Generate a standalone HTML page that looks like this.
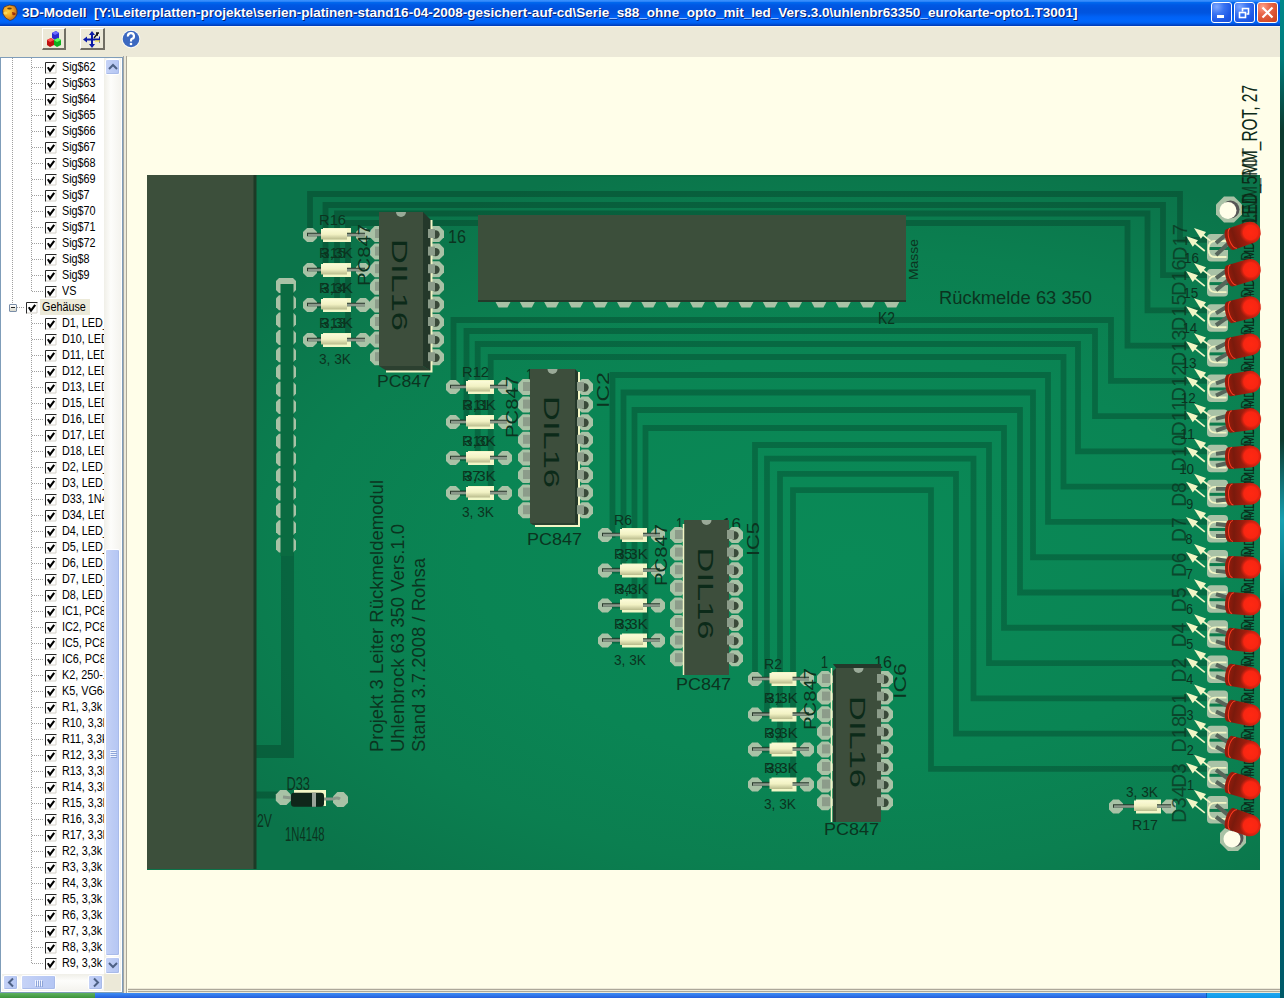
<!DOCTYPE html>
<html><head><meta charset="utf-8"><title>3D-Modell</title>
<style>
html,body{margin:0;padding:0;}
body{width:1284px;height:998px;overflow:hidden;position:relative;background:#fffee9;font-family:"Liberation Sans", sans-serif;}
.abs{position:absolute;}
.ttl{left:22px;top:5px;color:#fff;font-weight:bold;font-size:13px;white-space:nowrap;text-shadow:1px 1px 0 #0a1e6e;transform-origin:0 0;transform:scaleX(1.04);}
.trow{height:16px;font-size:12px;line-height:16px;white-space:nowrap;color:#000;transform:scaleX(0.9);transform-origin:0 0;margin-top:-1px;}
.chk{width:12px;height:12px;background:#fff;} .chk svg{display:block;} svg{display:block;}
.sb{box-sizing:border-box;border:1px solid #fff;border-radius:2px;background:linear-gradient(90deg,#c6d3f7,#bccbf4 50%,#b4c6f4);box-shadow:inset -1px -1px 0 #a9bbe9;}
</style></head><body>
<div class="abs" style="left:127px;top:56px;width:1153px;height:934px;background:#fffee9;"></div>
<svg class="abs" style="left:0;top:0;font-family:&quot;Liberation Sans&quot;, sans-serif;fill:#0b3420" width="1284" height="998" viewBox="0 0 1284 998">
<defs>
<radialGradient id="boardg" gradientUnits="userSpaceOnUse" cx="850" cy="560" r="750" gradientTransform="translate(850 560) scale(1 0.55) translate(-850 -560)">
<stop offset="0" stop-color="#0a8a57"/><stop offset="0.5" stop-color="#0a8554"/><stop offset="0.75" stop-color="#0b7f50"/><stop offset="1" stop-color="#0b744a"/></radialGradient>
<linearGradient id="resg" x1="0" y1="0" x2="0" y2="1">
<stop offset="0" stop-color="#fbfbd8"/><stop offset="0.5" stop-color="#f2f2c4"/><stop offset="1" stop-color="#b9bb8c"/></linearGradient>
<linearGradient id="ledb" x1="0" y1="0" x2="1" y2="0">
<stop offset="0" stop-color="#a01c0c"/><stop offset="0.25" stop-color="#7a1a0c"/><stop offset="0.7" stop-color="#b82010"/><stop offset="1" stop-color="#e02410"/></linearGradient>
<radialGradient id="ledd" cx="0.5" cy="0.5" r="0.5">
<stop offset="0" stop-color="#ff2812"/><stop offset="0.65" stop-color="#f82612"/><stop offset="1" stop-color="#d02010" stop-opacity="0"/></radialGradient>
</defs>
<rect x="147" y="175" width="1113" height="695" fill="url(#boardg)"/>
<rect x="147" y="175" width="1113" height="1.5" fill="#0a6b42"/>
<g opacity="0.2">
<path d="M310,235 L310,235 L310,194 L1180,194 L1180,239.8 L1215,239.8" fill="none" stroke="#000" stroke-width="5.8" stroke-linejoin="miter" stroke-linecap="square"/>
<path d="M310,270 L325.5,270 L325.5,205 L1163,205 L1163,275.07 L1215,275.07" fill="none" stroke="#000" stroke-width="5.8" stroke-linejoin="miter" stroke-linecap="square"/>
<path d="M310,305 L337,305 L337,213.5 L1147.5,213.5 L1147.5,310.34000000000003 L1215,310.34000000000003" fill="none" stroke="#000" stroke-width="5.8" stroke-linejoin="miter" stroke-linecap="square"/>
<path d="M310,340 L348,340 L348,223 L1127.5,223 L1127.5,345.61 L1215,345.61" fill="none" stroke="#000" stroke-width="5.8" stroke-linejoin="miter" stroke-linecap="square"/>
<path d="M453,387 L453.5,387 L453.5,320 L1111,320 L1111,380.88 L1215,380.88" fill="none" stroke="#000" stroke-width="5.8" stroke-linejoin="miter" stroke-linecap="square"/>
<path d="M453,422 L466.5,422 L466.5,331 L1095,331 L1095,416.15000000000003 L1215,416.15000000000003" fill="none" stroke="#000" stroke-width="5.8" stroke-linejoin="miter" stroke-linecap="square"/>
<path d="M453,458 L477.7,458 L477.7,344 L1078,344 L1078,451.42 L1215,451.42" fill="none" stroke="#000" stroke-width="5.8" stroke-linejoin="miter" stroke-linecap="square"/>
<path d="M453,493 L490.7,493 L490.7,357 L1063.5,357 L1063.5,486.69000000000005 L1215,486.69000000000005" fill="none" stroke="#000" stroke-width="5.8" stroke-linejoin="miter" stroke-linecap="square"/>
<path d="M605,535 L612.5,535 L612.5,375 L1048,375 L1048,521.96 L1215,521.96" fill="none" stroke="#000" stroke-width="5.8" stroke-linejoin="miter" stroke-linecap="square"/>
<path d="M605,570.5 L623.5,570.5 L623.5,392.5 L1033,392.5 L1033,557.23 L1215,557.23" fill="none" stroke="#000" stroke-width="5.8" stroke-linejoin="miter" stroke-linecap="square"/>
<path d="M605,605.5 L634.5,605.5 L634.5,410 L1020,410 L1020,592.5 L1215,592.5" fill="none" stroke="#000" stroke-width="5.8" stroke-linejoin="miter" stroke-linecap="square"/>
<path d="M605,640.5 L645.5,640.5 L645.5,428 L1004,428 L1004,627.77 L1215,627.77" fill="none" stroke="#000" stroke-width="5.8" stroke-linejoin="miter" stroke-linecap="square"/>
<path d="M755,679 L755,679 L755,445 L989,445 L989,663.04 L1215,663.04" fill="none" stroke="#000" stroke-width="5.8" stroke-linejoin="miter" stroke-linecap="square"/>
<path d="M755,714.6 L767,714.6 L767,458.6 L973.5,458.6 L973.5,698.3100000000001 L1215,698.3100000000001" fill="none" stroke="#000" stroke-width="5.8" stroke-linejoin="miter" stroke-linecap="square"/>
<path d="M755,749.5 L780,749.5 L780,473.8 L956,473.8 L956,733.58 L1215,733.58" fill="none" stroke="#000" stroke-width="5.8" stroke-linejoin="miter" stroke-linecap="square"/>
<path d="M755,784.5 L793,784.5 L793,490.2 L931,490.2 L931,768.8500000000001 L1215,768.8500000000001" fill="none" stroke="#000" stroke-width="5.8" stroke-linejoin="miter" stroke-linecap="square"/>
<path d="M255,751.5 L287.5,751.5 L287.5,285" fill="none" stroke="#000" stroke-width="13" stroke-linejoin="miter" stroke-linecap="square"/>
<path d="M255,795 L283,795" fill="none" stroke="#000" stroke-width="7" stroke-linejoin="miter" stroke-linecap="square"/>
</g>
<rect x="147" y="175" width="108" height="694" fill="#3c4f3b"/>
<rect x="253.5" y="175" width="3" height="694" fill="#1d3a26"/>
<path d="M276,281.0 L279,278.0 L293,278.0 L296,281.0 L296,290.0 L293,293.0 L279,293.0 L276,290.0 Z" fill="#a9c2a6"/>
<path d="M276,298.3 L279,295.3 L293,295.3 L296,298.3 L296,307.3 L293,310.3 L279,310.3 L276,307.3 Z" fill="#a9c2a6"/>
<path d="M276,315.6 L279,312.6 L293,312.6 L296,315.6 L296,324.6 L293,327.6 L279,327.6 L276,324.6 Z" fill="#a9c2a6"/>
<path d="M276,332.9 L279,329.9 L293,329.9 L296,332.9 L296,341.9 L293,344.9 L279,344.9 L276,341.9 Z" fill="#a9c2a6"/>
<path d="M276,350.2 L279,347.2 L293,347.2 L296,350.2 L296,359.2 L293,362.2 L279,362.2 L276,359.2 Z" fill="#a9c2a6"/>
<path d="M276,367.5 L279,364.5 L293,364.5 L296,367.5 L296,376.5 L293,379.5 L279,379.5 L276,376.5 Z" fill="#a9c2a6"/>
<path d="M276,384.8 L279,381.8 L293,381.8 L296,384.8 L296,393.8 L293,396.8 L279,396.8 L276,393.8 Z" fill="#a9c2a6"/>
<path d="M276,402.1 L279,399.1 L293,399.1 L296,402.1 L296,411.1 L293,414.1 L279,414.1 L276,411.1 Z" fill="#a9c2a6"/>
<path d="M276,419.4 L279,416.4 L293,416.4 L296,419.4 L296,428.4 L293,431.4 L279,431.4 L276,428.4 Z" fill="#a9c2a6"/>
<path d="M276,436.70000000000005 L279,433.70000000000005 L293,433.70000000000005 L296,436.70000000000005 L296,445.70000000000005 L293,448.70000000000005 L279,448.70000000000005 L276,445.70000000000005 Z" fill="#a9c2a6"/>
<path d="M276,454.0 L279,451.0 L293,451.0 L296,454.0 L296,463.0 L293,466.0 L279,466.0 L276,463.0 Z" fill="#a9c2a6"/>
<path d="M276,471.3 L279,468.3 L293,468.3 L296,471.3 L296,480.3 L293,483.3 L279,483.3 L276,480.3 Z" fill="#a9c2a6"/>
<path d="M276,488.6 L279,485.6 L293,485.6 L296,488.6 L296,497.6 L293,500.6 L279,500.6 L276,497.6 Z" fill="#a9c2a6"/>
<path d="M276,505.9 L279,502.9 L293,502.9 L296,505.9 L296,514.9 L293,517.9 L279,517.9 L276,514.9 Z" fill="#a9c2a6"/>
<path d="M276,523.2 L279,520.2 L293,520.2 L296,523.2 L296,532.2 L293,535.2 L279,535.2 L276,532.2 Z" fill="#a9c2a6"/>
<path d="M276,540.5 L279,537.5 L293,537.5 L296,540.5 L296,549.5 L293,552.5 L279,552.5 L276,549.5 Z" fill="#a9c2a6"/>
<path d="M287,284 L287,556" stroke="#0a6b41" stroke-width="13"/>
<path d="M495.0,301 L511.0,301 L507.5,307.5 L498.5,307.5 Z" fill="#a9c2a6"/>
<path d="M519.3,301 L535.3,301 L531.8,307.5 L522.8,307.5 Z" fill="#a9c2a6"/>
<path d="M543.6,301 L559.6,301 L556.1,307.5 L547.1,307.5 Z" fill="#a9c2a6"/>
<path d="M567.9,301 L583.9,301 L580.4,307.5 L571.4,307.5 Z" fill="#a9c2a6"/>
<path d="M592.2,301 L608.2,301 L604.7,307.5 L595.7,307.5 Z" fill="#a9c2a6"/>
<path d="M616.5,301 L632.5,301 L629.0,307.5 L620.0,307.5 Z" fill="#a9c2a6"/>
<path d="M640.8,301 L656.8,301 L653.3,307.5 L644.3,307.5 Z" fill="#a9c2a6"/>
<path d="M665.1,301 L681.1,301 L677.6,307.5 L668.6,307.5 Z" fill="#a9c2a6"/>
<path d="M689.4,301 L705.4,301 L701.9,307.5 L692.9,307.5 Z" fill="#a9c2a6"/>
<path d="M713.7,301 L729.7,301 L726.2,307.5 L717.2,307.5 Z" fill="#a9c2a6"/>
<path d="M738.0,301 L754.0,301 L750.5,307.5 L741.5,307.5 Z" fill="#a9c2a6"/>
<path d="M762.3,301 L778.3,301 L774.8,307.5 L765.8,307.5 Z" fill="#a9c2a6"/>
<path d="M786.6,301 L802.6,301 L799.1,307.5 L790.1,307.5 Z" fill="#a9c2a6"/>
<path d="M810.9000000000001,301 L826.9000000000001,301 L823.4000000000001,307.5 L814.4000000000001,307.5 Z" fill="#a9c2a6"/>
<path d="M835.2,301 L851.2,301 L847.7,307.5 L838.7,307.5 Z" fill="#a9c2a6"/>
<path d="M859.5,301 L875.5,301 L872.0,307.5 L863.0,307.5 Z" fill="#a9c2a6"/>
<path d="M883.8,301 L899.8,301 L896.3,307.5 L887.3,307.5 Z" fill="#a9c2a6"/>
<rect x="478" y="215" width="428" height="86" fill="#3c4f3b"/>
<rect x="478" y="300" width="428" height="2" fill="#243a2a"/>
<path d="M370,230.7 L374.7,226.0 L381.3,226.0 L386,230.7 L386,237.3 L381.3,242.0 L374.7,242.0 L370,237.3 Z" fill="#a9c2a6"/>
<path d="M428,230.7 L432.7,226.0 L439.3,226.0 L444,230.7 L444,237.3 L439.3,242.0 L432.7,242.0 L428,237.3 Z" fill="#a9c2a6"/>
<path d="M370,248.29999999999998 L374.7,243.6 L381.3,243.6 L386,248.29999999999998 L386,254.9 L381.3,259.6 L374.7,259.6 L370,254.9 Z" fill="#a9c2a6"/>
<path d="M428,248.29999999999998 L432.7,243.6 L439.3,243.6 L444,248.29999999999998 L444,254.9 L439.3,259.6 L432.7,259.6 L428,254.9 Z" fill="#a9c2a6"/>
<path d="M370,265.9 L374.7,261.2 L381.3,261.2 L386,265.9 L386,272.5 L381.3,277.2 L374.7,277.2 L370,272.5 Z" fill="#a9c2a6"/>
<path d="M428,265.9 L432.7,261.2 L439.3,261.2 L444,265.9 L444,272.5 L439.3,277.2 L432.7,277.2 L428,272.5 Z" fill="#a9c2a6"/>
<path d="M370,283.5 L374.7,278.8 L381.3,278.8 L386,283.5 L386,290.1 L381.3,294.8 L374.7,294.8 L370,290.1 Z" fill="#a9c2a6"/>
<path d="M428,283.5 L432.7,278.8 L439.3,278.8 L444,283.5 L444,290.1 L439.3,294.8 L432.7,294.8 L428,290.1 Z" fill="#a9c2a6"/>
<path d="M370,301.09999999999997 L374.7,296.4 L381.3,296.4 L386,301.09999999999997 L386,307.7 L381.3,312.4 L374.7,312.4 L370,307.7 Z" fill="#a9c2a6"/>
<path d="M428,301.09999999999997 L432.7,296.4 L439.3,296.4 L444,301.09999999999997 L444,307.7 L439.3,312.4 L432.7,312.4 L428,307.7 Z" fill="#a9c2a6"/>
<path d="M370,318.7 L374.7,314.0 L381.3,314.0 L386,318.7 L386,325.3 L381.3,330.0 L374.7,330.0 L370,325.3 Z" fill="#a9c2a6"/>
<path d="M428,318.7 L432.7,314.0 L439.3,314.0 L444,318.7 L444,325.3 L439.3,330.0 L432.7,330.0 L428,325.3 Z" fill="#a9c2a6"/>
<path d="M370,336.3 L374.7,331.6 L381.3,331.6 L386,336.3 L386,342.90000000000003 L381.3,347.6 L374.7,347.6 L370,342.90000000000003 Z" fill="#a9c2a6"/>
<path d="M428,336.3 L432.7,331.6 L439.3,331.6 L444,336.3 L444,342.90000000000003 L439.3,347.6 L432.7,347.6 L428,342.90000000000003 Z" fill="#a9c2a6"/>
<path d="M370,353.90000000000003 L374.7,349.20000000000005 L381.3,349.20000000000005 L386,353.90000000000003 L386,360.50000000000006 L381.3,365.20000000000005 L374.7,365.20000000000005 L370,360.50000000000006 Z" fill="#a9c2a6"/>
<path d="M428,353.90000000000003 L432.7,349.20000000000005 L439.3,349.20000000000005 L444,353.90000000000003 L444,360.50000000000006 L439.3,365.20000000000005 L432.7,365.20000000000005 L428,360.50000000000006 Z" fill="#a9c2a6"/>
<rect x="375" y="229.0" width="8" height="9" fill="#8c9c8a"/>
<rect x="375" y="246.6" width="8" height="9" fill="#8c9c8a"/>
<rect x="375" y="264.2" width="8" height="9" fill="#8c9c8a"/>
<rect x="375" y="281.8" width="8" height="9" fill="#8c9c8a"/>
<rect x="375" y="299.4" width="8" height="9" fill="#8c9c8a"/>
<rect x="375" y="317.0" width="8" height="9" fill="#8c9c8a"/>
<rect x="375" y="334.6" width="8" height="9" fill="#8c9c8a"/>
<rect x="375" y="352.20000000000005" width="8" height="9" fill="#8c9c8a"/>
<path d="M303,232.06 L307.06,228 L312.94,228 L317,232.06 L317,237.94 L312.94,242 L307.06,242 L303,237.94 Z" fill="#a9c2a6"/>
<path d="M356,232.06 L360.06,228 L365.94,228 L370,232.06 L370,237.94 L365.94,242 L360.06,242 L356,237.94 Z" fill="#a9c2a6"/>
<rect x="323" y="228" width="28" height="14" fill="#f2f6c6"/>
<line x1="307" y1="234.5" x2="365" y2="234.5" stroke="#2a3a2c" stroke-width="3.6"/>
<line x1="308" y1="235" x2="365" y2="235" stroke="#8a988a" stroke-width="2.4"/>
<rect x="321" y="229" width="26" height="10.5" fill="url(#resg)"/>
<path d="M303,267.06 L307.06,263 L312.94,263 L317,267.06 L317,272.94 L312.94,277 L307.06,277 L303,272.94 Z" fill="#a9c2a6"/>
<path d="M356,267.06 L360.06,263 L365.94,263 L370,267.06 L370,272.94 L365.94,277 L360.06,277 L356,272.94 Z" fill="#a9c2a6"/>
<rect x="323" y="263" width="28" height="14" fill="#f2f6c6"/>
<line x1="307" y1="269.5" x2="365" y2="269.5" stroke="#2a3a2c" stroke-width="3.6"/>
<line x1="308" y1="270" x2="365" y2="270" stroke="#8a988a" stroke-width="2.4"/>
<rect x="321" y="264" width="26" height="10.5" fill="url(#resg)"/>
<path d="M303,302.06 L307.06,298 L312.94,298 L317,302.06 L317,307.94 L312.94,312 L307.06,312 L303,307.94 Z" fill="#a9c2a6"/>
<path d="M356,302.06 L360.06,298 L365.94,298 L370,302.06 L370,307.94 L365.94,312 L360.06,312 L356,307.94 Z" fill="#a9c2a6"/>
<rect x="323" y="298" width="28" height="14" fill="#f2f6c6"/>
<line x1="307" y1="304.5" x2="365" y2="304.5" stroke="#2a3a2c" stroke-width="3.6"/>
<line x1="308" y1="305" x2="365" y2="305" stroke="#8a988a" stroke-width="2.4"/>
<rect x="321" y="299" width="26" height="10.5" fill="url(#resg)"/>
<path d="M303,337.06 L307.06,333 L312.94,333 L317,337.06 L317,342.94 L312.94,347 L307.06,347 L303,342.94 Z" fill="#a9c2a6"/>
<path d="M356,337.06 L360.06,333 L365.94,333 L370,337.06 L370,342.94 L365.94,347 L360.06,347 L356,342.94 Z" fill="#a9c2a6"/>
<rect x="323" y="333" width="28" height="14" fill="#f2f6c6"/>
<line x1="307" y1="339.5" x2="365" y2="339.5" stroke="#2a3a2c" stroke-width="3.6"/>
<line x1="308" y1="340" x2="365" y2="340" stroke="#8a988a" stroke-width="2.4"/>
<rect x="321" y="334" width="26" height="10.5" fill="url(#resg)"/>
<path d="M423,212 L431,220 L431,371 L423,366 Z" fill="#24382a"/>
<path d="M379,366 L423,366 L431,371 L387,371 Z" fill="#2c4030"/>
<rect x="379" y="212" width="44" height="154" fill="#3d4e3c"/>
<path d="M396.0,212 A5,5 0 0 0 406.0,212 Z" fill="#9aaa98"/>
<path d="M431.5,220 L431.5,371.5 L386,371.5" fill="none" stroke="#f2f6c6" stroke-width="2"/>
<circle cx="435.5" cy="234.5" r="4.2" fill="#3a4a3a"/>
<rect x="428" y="229.0" width="7" height="9" fill="#8c9c8a"/>
<circle cx="435.5" cy="252.1" r="4.2" fill="#3a4a3a"/>
<rect x="428" y="246.6" width="7" height="9" fill="#8c9c8a"/>
<circle cx="435.5" cy="269.7" r="4.2" fill="#3a4a3a"/>
<rect x="428" y="264.2" width="7" height="9" fill="#8c9c8a"/>
<circle cx="435.5" cy="287.3" r="4.2" fill="#3a4a3a"/>
<rect x="428" y="281.8" width="7" height="9" fill="#8c9c8a"/>
<circle cx="435.5" cy="304.9" r="4.2" fill="#3a4a3a"/>
<rect x="428" y="299.4" width="7" height="9" fill="#8c9c8a"/>
<circle cx="435.5" cy="322.5" r="4.2" fill="#3a4a3a"/>
<rect x="428" y="317.0" width="7" height="9" fill="#8c9c8a"/>
<circle cx="435.5" cy="340.1" r="4.2" fill="#3a4a3a"/>
<rect x="428" y="334.6" width="7" height="9" fill="#8c9c8a"/>
<circle cx="435.5" cy="357.70000000000005" r="4.2" fill="#3a4a3a"/>
<rect x="428" y="352.20000000000005" width="7" height="9" fill="#8c9c8a"/>
<text x="400" y="285" font-size="22" fill="#0c2a19" text-anchor="middle" transform="rotate(90 400 285)" dy="8" textLength="92" lengthAdjust="spacingAndGlyphs">DIL16</text>
<text x="448" y="243" font-size="19" textLength="18" lengthAdjust="spacingAndGlyphs">16</text>
<text x="377" y="387" font-size="16" textLength="54" lengthAdjust="spacingAndGlyphs">PC847</text>
<text x="526" y="381" font-size="17" textLength="7" lengthAdjust="spacingAndGlyphs">1</text>
<text x="676" y="530" font-size="17" textLength="7" lengthAdjust="spacingAndGlyphs">1</text>
<text x="821" y="668" font-size="17" textLength="7" lengthAdjust="spacingAndGlyphs">1</text>
<text x="722" y="530" font-size="17" textLength="19" lengthAdjust="spacingAndGlyphs">16</text>
<text x="874" y="668" font-size="17" textLength="18" lengthAdjust="spacingAndGlyphs">16</text>
<path d="M518,383.7 L522.7,379.0 L529.3,379.0 L534,383.7 L534,390.3 L529.3,395.0 L522.7,395.0 L518,390.3 Z" fill="#a9c2a6"/>
<path d="M577,383.7 L581.7,379.0 L588.3,379.0 L593,383.7 L593,390.3 L588.3,395.0 L581.7,395.0 L577,390.3 Z" fill="#a9c2a6"/>
<path d="M518,401.3 L522.7,396.6 L529.3,396.6 L534,401.3 L534,407.90000000000003 L529.3,412.6 L522.7,412.6 L518,407.90000000000003 Z" fill="#a9c2a6"/>
<path d="M577,401.3 L581.7,396.6 L588.3,396.6 L593,401.3 L593,407.90000000000003 L588.3,412.6 L581.7,412.6 L577,407.90000000000003 Z" fill="#a9c2a6"/>
<path d="M518,418.9 L522.7,414.2 L529.3,414.2 L534,418.9 L534,425.5 L529.3,430.2 L522.7,430.2 L518,425.5 Z" fill="#a9c2a6"/>
<path d="M577,418.9 L581.7,414.2 L588.3,414.2 L593,418.9 L593,425.5 L588.3,430.2 L581.7,430.2 L577,425.5 Z" fill="#a9c2a6"/>
<path d="M518,436.5 L522.7,431.8 L529.3,431.8 L534,436.5 L534,443.1 L529.3,447.8 L522.7,447.8 L518,443.1 Z" fill="#a9c2a6"/>
<path d="M577,436.5 L581.7,431.8 L588.3,431.8 L593,436.5 L593,443.1 L588.3,447.8 L581.7,447.8 L577,443.1 Z" fill="#a9c2a6"/>
<path d="M518,454.09999999999997 L522.7,449.4 L529.3,449.4 L534,454.09999999999997 L534,460.7 L529.3,465.4 L522.7,465.4 L518,460.7 Z" fill="#a9c2a6"/>
<path d="M577,454.09999999999997 L581.7,449.4 L588.3,449.4 L593,454.09999999999997 L593,460.7 L588.3,465.4 L581.7,465.4 L577,460.7 Z" fill="#a9c2a6"/>
<path d="M518,471.7 L522.7,467.0 L529.3,467.0 L534,471.7 L534,478.3 L529.3,483.0 L522.7,483.0 L518,478.3 Z" fill="#a9c2a6"/>
<path d="M577,471.7 L581.7,467.0 L588.3,467.0 L593,471.7 L593,478.3 L588.3,483.0 L581.7,483.0 L577,478.3 Z" fill="#a9c2a6"/>
<path d="M518,489.3 L522.7,484.6 L529.3,484.6 L534,489.3 L534,495.90000000000003 L529.3,500.6 L522.7,500.6 L518,495.90000000000003 Z" fill="#a9c2a6"/>
<path d="M577,489.3 L581.7,484.6 L588.3,484.6 L593,489.3 L593,495.90000000000003 L588.3,500.6 L581.7,500.6 L577,495.90000000000003 Z" fill="#a9c2a6"/>
<path d="M518,506.90000000000003 L522.7,502.20000000000005 L529.3,502.20000000000005 L534,506.90000000000003 L534,513.5 L529.3,518.2 L522.7,518.2 L518,513.5 Z" fill="#a9c2a6"/>
<path d="M577,506.90000000000003 L581.7,502.20000000000005 L588.3,502.20000000000005 L593,506.90000000000003 L593,513.5 L588.3,518.2 L581.7,518.2 L577,513.5 Z" fill="#a9c2a6"/>
<rect x="523" y="382.0" width="8" height="9" fill="#8c9c8a"/>
<rect x="523" y="399.6" width="8" height="9" fill="#8c9c8a"/>
<rect x="523" y="417.2" width="8" height="9" fill="#8c9c8a"/>
<rect x="523" y="434.8" width="8" height="9" fill="#8c9c8a"/>
<rect x="523" y="452.4" width="8" height="9" fill="#8c9c8a"/>
<rect x="523" y="470.0" width="8" height="9" fill="#8c9c8a"/>
<rect x="523" y="487.6" width="8" height="9" fill="#8c9c8a"/>
<rect x="523" y="505.20000000000005" width="8" height="9" fill="#8c9c8a"/>
<path d="M446,384.06 L450.06,380 L455.94,380 L460,384.06 L460,389.94 L455.94,394 L450.06,394 L446,389.94 Z" fill="#a9c2a6"/>
<path d="M498,384.06 L502.06,380 L507.94,380 L512,384.06 L512,389.94 L507.94,394 L502.06,394 L498,389.94 Z" fill="#a9c2a6"/>
<rect x="468" y="380" width="26" height="14" fill="#f2f6c6"/>
<line x1="450" y1="386.5" x2="507" y2="386.5" stroke="#2a3a2c" stroke-width="3.6"/>
<line x1="451" y1="387" x2="507" y2="387" stroke="#8a988a" stroke-width="2.4"/>
<rect x="466" y="381" width="24" height="10.5" fill="url(#resg)"/>
<path d="M446,419.06 L450.06,415 L455.94,415 L460,419.06 L460,424.94 L455.94,429 L450.06,429 L446,424.94 Z" fill="#a9c2a6"/>
<path d="M498,419.06 L502.06,415 L507.94,415 L512,419.06 L512,424.94 L507.94,429 L502.06,429 L498,424.94 Z" fill="#a9c2a6"/>
<rect x="468" y="415" width="26" height="14" fill="#f2f6c6"/>
<line x1="450" y1="421.5" x2="507" y2="421.5" stroke="#2a3a2c" stroke-width="3.6"/>
<line x1="451" y1="422" x2="507" y2="422" stroke="#8a988a" stroke-width="2.4"/>
<rect x="466" y="416" width="24" height="10.5" fill="url(#resg)"/>
<path d="M446,455.06 L450.06,451 L455.94,451 L460,455.06 L460,460.94 L455.94,465 L450.06,465 L446,460.94 Z" fill="#a9c2a6"/>
<path d="M498,455.06 L502.06,451 L507.94,451 L512,455.06 L512,460.94 L507.94,465 L502.06,465 L498,460.94 Z" fill="#a9c2a6"/>
<rect x="468" y="451" width="26" height="14" fill="#f2f6c6"/>
<line x1="450" y1="457.5" x2="507" y2="457.5" stroke="#2a3a2c" stroke-width="3.6"/>
<line x1="451" y1="458" x2="507" y2="458" stroke="#8a988a" stroke-width="2.4"/>
<rect x="466" y="452" width="24" height="10.5" fill="url(#resg)"/>
<path d="M446,490.06 L450.06,486 L455.94,486 L460,490.06 L460,495.94 L455.94,500 L450.06,500 L446,495.94 Z" fill="#a9c2a6"/>
<path d="M498,490.06 L502.06,486 L507.94,486 L512,490.06 L512,495.94 L507.94,500 L502.06,500 L498,495.94 Z" fill="#a9c2a6"/>
<rect x="468" y="486" width="26" height="14" fill="#f2f6c6"/>
<line x1="450" y1="492.5" x2="507" y2="492.5" stroke="#2a3a2c" stroke-width="3.6"/>
<line x1="451" y1="493" x2="507" y2="493" stroke="#8a988a" stroke-width="2.4"/>
<rect x="466" y="487" width="24" height="10.5" fill="url(#resg)"/>
<path d="M575,369 L578,372 L578,525 L575,523 Z" fill="#24382a"/>
<path d="M530,523 L575,523 L578,525 L533,525 Z" fill="#2c4030"/>
<rect x="530" y="369" width="45" height="154" fill="#3d4e3c"/>
<path d="M547.5,369 A5,5 0 0 0 557.5,369 Z" fill="#9aaa98"/>
<path d="M579,372 L579,526 L535,526" fill="none" stroke="#f2f6c6" stroke-width="2"/>
<circle cx="584.5" cy="387.5" r="4.2" fill="#3a4a3a"/>
<rect x="577" y="382.0" width="7" height="9" fill="#8c9c8a"/>
<circle cx="584.5" cy="405.1" r="4.2" fill="#3a4a3a"/>
<rect x="577" y="399.6" width="7" height="9" fill="#8c9c8a"/>
<circle cx="584.5" cy="422.7" r="4.2" fill="#3a4a3a"/>
<rect x="577" y="417.2" width="7" height="9" fill="#8c9c8a"/>
<circle cx="584.5" cy="440.3" r="4.2" fill="#3a4a3a"/>
<rect x="577" y="434.8" width="7" height="9" fill="#8c9c8a"/>
<circle cx="584.5" cy="457.9" r="4.2" fill="#3a4a3a"/>
<rect x="577" y="452.4" width="7" height="9" fill="#8c9c8a"/>
<circle cx="584.5" cy="475.5" r="4.2" fill="#3a4a3a"/>
<rect x="577" y="470.0" width="7" height="9" fill="#8c9c8a"/>
<circle cx="584.5" cy="493.1" r="4.2" fill="#3a4a3a"/>
<rect x="577" y="487.6" width="7" height="9" fill="#8c9c8a"/>
<circle cx="584.5" cy="510.70000000000005" r="4.2" fill="#3a4a3a"/>
<rect x="577" y="505.20000000000005" width="7" height="9" fill="#8c9c8a"/>
<text x="552" y="442" font-size="22" fill="#0c2a19" text-anchor="middle" transform="rotate(90 552 442)" dy="8" textLength="92" lengthAdjust="spacingAndGlyphs">DIL16</text>
<text x="527" y="545" font-size="16" textLength="55" lengthAdjust="spacingAndGlyphs">PC847</text>
<path d="M670,531.7 L674.7,527.0 L681.3,527.0 L686,531.7 L686,538.3 L681.3,543.0 L674.7,543.0 L670,538.3 Z" fill="#a9c2a6"/>
<path d="M727,531.7 L731.7,527.0 L738.3,527.0 L743,531.7 L743,538.3 L738.3,543.0 L731.7,543.0 L727,538.3 Z" fill="#a9c2a6"/>
<path d="M670,549.3000000000001 L674.7,544.6 L681.3,544.6 L686,549.3000000000001 L686,555.9 L681.3,560.6 L674.7,560.6 L670,555.9 Z" fill="#a9c2a6"/>
<path d="M727,549.3000000000001 L731.7,544.6 L738.3,544.6 L743,549.3000000000001 L743,555.9 L738.3,560.6 L731.7,560.6 L727,555.9 Z" fill="#a9c2a6"/>
<path d="M670,566.9000000000001 L674.7,562.2 L681.3,562.2 L686,566.9000000000001 L686,573.5 L681.3,578.2 L674.7,578.2 L670,573.5 Z" fill="#a9c2a6"/>
<path d="M727,566.9000000000001 L731.7,562.2 L738.3,562.2 L743,566.9000000000001 L743,573.5 L738.3,578.2 L731.7,578.2 L727,573.5 Z" fill="#a9c2a6"/>
<path d="M670,584.5 L674.7,579.8 L681.3,579.8 L686,584.5 L686,591.0999999999999 L681.3,595.8 L674.7,595.8 L670,591.0999999999999 Z" fill="#a9c2a6"/>
<path d="M727,584.5 L731.7,579.8 L738.3,579.8 L743,584.5 L743,591.0999999999999 L738.3,595.8 L731.7,595.8 L727,591.0999999999999 Z" fill="#a9c2a6"/>
<path d="M670,602.1 L674.7,597.4 L681.3,597.4 L686,602.1 L686,608.6999999999999 L681.3,613.4 L674.7,613.4 L670,608.6999999999999 Z" fill="#a9c2a6"/>
<path d="M727,602.1 L731.7,597.4 L738.3,597.4 L743,602.1 L743,608.6999999999999 L738.3,613.4 L731.7,613.4 L727,608.6999999999999 Z" fill="#a9c2a6"/>
<path d="M670,619.7 L674.7,615.0 L681.3,615.0 L686,619.7 L686,626.3 L681.3,631.0 L674.7,631.0 L670,626.3 Z" fill="#a9c2a6"/>
<path d="M727,619.7 L731.7,615.0 L738.3,615.0 L743,619.7 L743,626.3 L738.3,631.0 L731.7,631.0 L727,626.3 Z" fill="#a9c2a6"/>
<path d="M670,637.3000000000001 L674.7,632.6 L681.3,632.6 L686,637.3000000000001 L686,643.9 L681.3,648.6 L674.7,648.6 L670,643.9 Z" fill="#a9c2a6"/>
<path d="M727,637.3000000000001 L731.7,632.6 L738.3,632.6 L743,637.3000000000001 L743,643.9 L738.3,648.6 L731.7,648.6 L727,643.9 Z" fill="#a9c2a6"/>
<path d="M670,654.9000000000001 L674.7,650.2 L681.3,650.2 L686,654.9000000000001 L686,661.5 L681.3,666.2 L674.7,666.2 L670,661.5 Z" fill="#a9c2a6"/>
<path d="M727,654.9000000000001 L731.7,650.2 L738.3,650.2 L743,654.9000000000001 L743,661.5 L738.3,666.2 L731.7,666.2 L727,661.5 Z" fill="#a9c2a6"/>
<rect x="675" y="530.0" width="8" height="9" fill="#8c9c8a"/>
<rect x="675" y="547.6" width="8" height="9" fill="#8c9c8a"/>
<rect x="675" y="565.2" width="8" height="9" fill="#8c9c8a"/>
<rect x="675" y="582.8" width="8" height="9" fill="#8c9c8a"/>
<rect x="675" y="600.4" width="8" height="9" fill="#8c9c8a"/>
<rect x="675" y="618.0" width="8" height="9" fill="#8c9c8a"/>
<rect x="675" y="635.6" width="8" height="9" fill="#8c9c8a"/>
<rect x="675" y="653.2" width="8" height="9" fill="#8c9c8a"/>
<path d="M598,532.06 L602.06,528 L607.94,528 L612,532.06 L612,537.94 L607.94,542 L602.06,542 L598,537.94 Z" fill="#a9c2a6"/>
<path d="M651,532.06 L655.06,528 L660.94,528 L665,532.06 L665,537.94 L660.94,542 L655.06,542 L651,537.94 Z" fill="#a9c2a6"/>
<rect x="622" y="528" width="25" height="14" fill="#f2f6c6"/>
<line x1="602" y1="534.5" x2="660" y2="534.5" stroke="#2a3a2c" stroke-width="3.6"/>
<line x1="603" y1="535" x2="660" y2="535" stroke="#8a988a" stroke-width="2.4"/>
<rect x="620" y="529" width="23" height="10.5" fill="url(#resg)"/>
<path d="M598,567.56 L602.06,563.5 L607.94,563.5 L612,567.56 L612,573.44 L607.94,577.5 L602.06,577.5 L598,573.44 Z" fill="#a9c2a6"/>
<path d="M651,567.56 L655.06,563.5 L660.94,563.5 L665,567.56 L665,573.44 L660.94,577.5 L655.06,577.5 L651,573.44 Z" fill="#a9c2a6"/>
<rect x="622" y="563.5" width="25" height="14" fill="#f2f6c6"/>
<line x1="602" y1="570.0" x2="660" y2="570.0" stroke="#2a3a2c" stroke-width="3.6"/>
<line x1="603" y1="570.5" x2="660" y2="570.5" stroke="#8a988a" stroke-width="2.4"/>
<rect x="620" y="564.5" width="23" height="10.5" fill="url(#resg)"/>
<path d="M598,602.56 L602.06,598.5 L607.94,598.5 L612,602.56 L612,608.44 L607.94,612.5 L602.06,612.5 L598,608.44 Z" fill="#a9c2a6"/>
<path d="M651,602.56 L655.06,598.5 L660.94,598.5 L665,602.56 L665,608.44 L660.94,612.5 L655.06,612.5 L651,608.44 Z" fill="#a9c2a6"/>
<rect x="622" y="598.5" width="25" height="14" fill="#f2f6c6"/>
<line x1="602" y1="605.0" x2="660" y2="605.0" stroke="#2a3a2c" stroke-width="3.6"/>
<line x1="603" y1="605.5" x2="660" y2="605.5" stroke="#8a988a" stroke-width="2.4"/>
<rect x="620" y="599.5" width="23" height="10.5" fill="url(#resg)"/>
<path d="M598,637.56 L602.06,633.5 L607.94,633.5 L612,637.56 L612,643.44 L607.94,647.5 L602.06,647.5 L598,643.44 Z" fill="#a9c2a6"/>
<path d="M651,637.56 L655.06,633.5 L660.94,633.5 L665,637.56 L665,643.44 L660.94,647.5 L655.06,647.5 L651,643.44 Z" fill="#a9c2a6"/>
<rect x="622" y="633.5" width="25" height="14" fill="#f2f6c6"/>
<line x1="602" y1="640.0" x2="660" y2="640.0" stroke="#2a3a2c" stroke-width="3.6"/>
<line x1="603" y1="640.5" x2="660" y2="640.5" stroke="#8a988a" stroke-width="2.4"/>
<rect x="620" y="634.5" width="23" height="10.5" fill="url(#resg)"/>
<rect x="684" y="520" width="45" height="155" fill="#3d4e3c"/>
<path d="M701.5,520 A5,5 0 0 0 711.5,520 Z" fill="#9aaa98"/>
<path d="M683.5,524 L683.5,675" fill="none" stroke="#f2f6c6" stroke-width="1.5"/>
<circle cx="734.5" cy="535.5" r="4.2" fill="#3a4a3a"/>
<rect x="727" y="530.0" width="7" height="9" fill="#8c9c8a"/>
<circle cx="734.5" cy="553.1" r="4.2" fill="#3a4a3a"/>
<rect x="727" y="547.6" width="7" height="9" fill="#8c9c8a"/>
<circle cx="734.5" cy="570.7" r="4.2" fill="#3a4a3a"/>
<rect x="727" y="565.2" width="7" height="9" fill="#8c9c8a"/>
<circle cx="734.5" cy="588.3" r="4.2" fill="#3a4a3a"/>
<rect x="727" y="582.8" width="7" height="9" fill="#8c9c8a"/>
<circle cx="734.5" cy="605.9" r="4.2" fill="#3a4a3a"/>
<rect x="727" y="600.4" width="7" height="9" fill="#8c9c8a"/>
<circle cx="734.5" cy="623.5" r="4.2" fill="#3a4a3a"/>
<rect x="727" y="618.0" width="7" height="9" fill="#8c9c8a"/>
<circle cx="734.5" cy="641.1" r="4.2" fill="#3a4a3a"/>
<rect x="727" y="635.6" width="7" height="9" fill="#8c9c8a"/>
<circle cx="734.5" cy="658.7" r="4.2" fill="#3a4a3a"/>
<rect x="727" y="653.2" width="7" height="9" fill="#8c9c8a"/>
<text x="706" y="593.5" font-size="22" fill="#0c2a19" text-anchor="middle" transform="rotate(90 706 593.5)" dy="8" textLength="92" lengthAdjust="spacingAndGlyphs">DIL16</text>
<text x="676" y="690" font-size="16" textLength="55" lengthAdjust="spacingAndGlyphs">PC847</text>
<path d="M817,675.7 L821.7,671.0 L828.3,671.0 L833,675.7 L833,682.3 L828.3,687.0 L821.7,687.0 L817,682.3 Z" fill="#a9c2a6"/>
<path d="M877,675.7 L881.7,671.0 L888.3,671.0 L893,675.7 L893,682.3 L888.3,687.0 L881.7,687.0 L877,682.3 Z" fill="#a9c2a6"/>
<path d="M817,693.3000000000001 L821.7,688.6 L828.3,688.6 L833,693.3000000000001 L833,699.9 L828.3,704.6 L821.7,704.6 L817,699.9 Z" fill="#a9c2a6"/>
<path d="M877,693.3000000000001 L881.7,688.6 L888.3,688.6 L893,693.3000000000001 L893,699.9 L888.3,704.6 L881.7,704.6 L877,699.9 Z" fill="#a9c2a6"/>
<path d="M817,710.9000000000001 L821.7,706.2 L828.3,706.2 L833,710.9000000000001 L833,717.5 L828.3,722.2 L821.7,722.2 L817,717.5 Z" fill="#a9c2a6"/>
<path d="M877,710.9000000000001 L881.7,706.2 L888.3,706.2 L893,710.9000000000001 L893,717.5 L888.3,722.2 L881.7,722.2 L877,717.5 Z" fill="#a9c2a6"/>
<path d="M817,728.5 L821.7,723.8 L828.3,723.8 L833,728.5 L833,735.0999999999999 L828.3,739.8 L821.7,739.8 L817,735.0999999999999 Z" fill="#a9c2a6"/>
<path d="M877,728.5 L881.7,723.8 L888.3,723.8 L893,728.5 L893,735.0999999999999 L888.3,739.8 L881.7,739.8 L877,735.0999999999999 Z" fill="#a9c2a6"/>
<path d="M817,746.1 L821.7,741.4 L828.3,741.4 L833,746.1 L833,752.6999999999999 L828.3,757.4 L821.7,757.4 L817,752.6999999999999 Z" fill="#a9c2a6"/>
<path d="M877,746.1 L881.7,741.4 L888.3,741.4 L893,746.1 L893,752.6999999999999 L888.3,757.4 L881.7,757.4 L877,752.6999999999999 Z" fill="#a9c2a6"/>
<path d="M817,763.7 L821.7,759.0 L828.3,759.0 L833,763.7 L833,770.3 L828.3,775.0 L821.7,775.0 L817,770.3 Z" fill="#a9c2a6"/>
<path d="M877,763.7 L881.7,759.0 L888.3,759.0 L893,763.7 L893,770.3 L888.3,775.0 L881.7,775.0 L877,770.3 Z" fill="#a9c2a6"/>
<path d="M817,781.3000000000001 L821.7,776.6 L828.3,776.6 L833,781.3000000000001 L833,787.9 L828.3,792.6 L821.7,792.6 L817,787.9 Z" fill="#a9c2a6"/>
<path d="M877,781.3000000000001 L881.7,776.6 L888.3,776.6 L893,781.3000000000001 L893,787.9 L888.3,792.6 L881.7,792.6 L877,787.9 Z" fill="#a9c2a6"/>
<path d="M817,798.9000000000001 L821.7,794.2 L828.3,794.2 L833,798.9000000000001 L833,805.5 L828.3,810.2 L821.7,810.2 L817,805.5 Z" fill="#a9c2a6"/>
<path d="M877,798.9000000000001 L881.7,794.2 L888.3,794.2 L893,798.9000000000001 L893,805.5 L888.3,810.2 L881.7,810.2 L877,805.5 Z" fill="#a9c2a6"/>
<rect x="822" y="674.0" width="8" height="9" fill="#8c9c8a"/>
<rect x="822" y="691.6" width="8" height="9" fill="#8c9c8a"/>
<rect x="822" y="709.2" width="8" height="9" fill="#8c9c8a"/>
<rect x="822" y="726.8" width="8" height="9" fill="#8c9c8a"/>
<rect x="822" y="744.4" width="8" height="9" fill="#8c9c8a"/>
<rect x="822" y="762.0" width="8" height="9" fill="#8c9c8a"/>
<rect x="822" y="779.6" width="8" height="9" fill="#8c9c8a"/>
<rect x="822" y="797.2" width="8" height="9" fill="#8c9c8a"/>
<path d="M748,676.06 L752.06,672 L757.94,672 L762,676.06 L762,681.94 L757.94,686 L752.06,686 L748,681.94 Z" fill="#a9c2a6"/>
<path d="M800,676.06 L804.06,672 L809.94,672 L814,676.06 L814,681.94 L809.94,686 L804.06,686 L800,681.94 Z" fill="#a9c2a6"/>
<rect x="771.5" y="672" width="25.0" height="14" fill="#f2f6c6"/>
<line x1="752" y1="678.5" x2="809" y2="678.5" stroke="#2a3a2c" stroke-width="3.6"/>
<line x1="753" y1="679" x2="809" y2="679" stroke="#8a988a" stroke-width="2.4"/>
<rect x="769.5" y="673" width="23.0" height="10.5" fill="url(#resg)"/>
<path d="M748,711.66 L752.06,707.6 L757.94,707.6 L762,711.66 L762,717.5400000000001 L757.94,721.6 L752.06,721.6 L748,717.5400000000001 Z" fill="#a9c2a6"/>
<path d="M800,711.66 L804.06,707.6 L809.94,707.6 L814,711.66 L814,717.5400000000001 L809.94,721.6 L804.06,721.6 L800,717.5400000000001 Z" fill="#a9c2a6"/>
<rect x="771.5" y="707.6" width="25.0" height="14" fill="#f2f6c6"/>
<line x1="752" y1="714.1" x2="809" y2="714.1" stroke="#2a3a2c" stroke-width="3.6"/>
<line x1="753" y1="714.6" x2="809" y2="714.6" stroke="#8a988a" stroke-width="2.4"/>
<rect x="769.5" y="708.6" width="23.0" height="10.5" fill="url(#resg)"/>
<path d="M748,746.56 L752.06,742.5 L757.94,742.5 L762,746.56 L762,752.44 L757.94,756.5 L752.06,756.5 L748,752.44 Z" fill="#a9c2a6"/>
<path d="M800,746.56 L804.06,742.5 L809.94,742.5 L814,746.56 L814,752.44 L809.94,756.5 L804.06,756.5 L800,752.44 Z" fill="#a9c2a6"/>
<rect x="771.5" y="742.5" width="25.0" height="14" fill="#f2f6c6"/>
<line x1="752" y1="749.0" x2="809" y2="749.0" stroke="#2a3a2c" stroke-width="3.6"/>
<line x1="753" y1="749.5" x2="809" y2="749.5" stroke="#8a988a" stroke-width="2.4"/>
<rect x="769.5" y="743.5" width="23.0" height="10.5" fill="url(#resg)"/>
<path d="M748,781.56 L752.06,777.5 L757.94,777.5 L762,781.56 L762,787.44 L757.94,791.5 L752.06,791.5 L748,787.44 Z" fill="#a9c2a6"/>
<path d="M800,781.56 L804.06,777.5 L809.94,777.5 L814,781.56 L814,787.44 L809.94,791.5 L804.06,791.5 L800,787.44 Z" fill="#a9c2a6"/>
<rect x="771.5" y="777.5" width="25.0" height="14" fill="#f2f6c6"/>
<line x1="752" y1="784.0" x2="809" y2="784.0" stroke="#2a3a2c" stroke-width="3.6"/>
<line x1="753" y1="784.5" x2="809" y2="784.5" stroke="#8a988a" stroke-width="2.4"/>
<rect x="769.5" y="778.5" width="23.0" height="10.5" fill="url(#resg)"/>
<path d="M836,668 L833,671 L833,822 L836,822 Z" fill="#24382a"/>
<path d="M836,668 L881,668 L881,664 L833,664 Z" fill="#24382a"/>
<rect x="836" y="668" width="45" height="154" fill="#3d4e3c"/>
<path d="M853.5,668 A5,5 0 0 0 863.5,668 Z" fill="#9aaa98"/>
<path d="M831.5,668 L831.5,822" fill="none" stroke="#f2f6c6" stroke-width="1.5"/>
<circle cx="884.5" cy="679.5" r="4.2" fill="#3a4a3a"/>
<rect x="877" y="674.0" width="7" height="9" fill="#8c9c8a"/>
<circle cx="884.5" cy="697.1" r="4.2" fill="#3a4a3a"/>
<rect x="877" y="691.6" width="7" height="9" fill="#8c9c8a"/>
<circle cx="884.5" cy="714.7" r="4.2" fill="#3a4a3a"/>
<rect x="877" y="709.2" width="7" height="9" fill="#8c9c8a"/>
<circle cx="884.5" cy="732.3" r="4.2" fill="#3a4a3a"/>
<rect x="877" y="726.8" width="7" height="9" fill="#8c9c8a"/>
<circle cx="884.5" cy="749.9" r="4.2" fill="#3a4a3a"/>
<rect x="877" y="744.4" width="7" height="9" fill="#8c9c8a"/>
<circle cx="884.5" cy="767.5" r="4.2" fill="#3a4a3a"/>
<rect x="877" y="762.0" width="7" height="9" fill="#8c9c8a"/>
<circle cx="884.5" cy="785.1" r="4.2" fill="#3a4a3a"/>
<rect x="877" y="779.6" width="7" height="9" fill="#8c9c8a"/>
<circle cx="884.5" cy="802.7" r="4.2" fill="#3a4a3a"/>
<rect x="877" y="797.2" width="7" height="9" fill="#8c9c8a"/>
<text x="858" y="742" font-size="22" fill="#0c2a19" text-anchor="middle" transform="rotate(90 858 742)" dy="8" textLength="92" lengthAdjust="spacingAndGlyphs">DIL16</text>
<text x="824" y="835" font-size="16" textLength="55" lengthAdjust="spacingAndGlyphs">PC847</text>
<text x="319" y="225" font-size="14" textLength="27" lengthAdjust="spacingAndGlyphs">R16</text>
<text x="319" y="258" font-size="14" textLength="27" lengthAdjust="spacingAndGlyphs">R15</text>
<text x="321" y="258" font-size="14" textLength="32" lengthAdjust="spacingAndGlyphs">3,3K</text>
<text x="319" y="293" font-size="14" textLength="27" lengthAdjust="spacingAndGlyphs">R14</text>
<text x="321" y="293" font-size="14" textLength="32" lengthAdjust="spacingAndGlyphs">3,3K</text>
<text x="319" y="328" font-size="14" textLength="27" lengthAdjust="spacingAndGlyphs">R13</text>
<text x="321" y="328" font-size="14" textLength="32" lengthAdjust="spacingAndGlyphs">3,3K</text>
<text x="319" y="364" font-size="14" textLength="32" lengthAdjust="spacingAndGlyphs">3, 3K</text>
<text x="370" y="286" font-size="17" transform="rotate(-90 370 286)" textLength="62" lengthAdjust="spacingAndGlyphs">PC847</text>
<text x="462" y="377" font-size="14" textLength="27" lengthAdjust="spacingAndGlyphs">R12</text>
<text x="462" y="410" font-size="14" textLength="27" lengthAdjust="spacingAndGlyphs">R11</text>
<text x="464" y="410" font-size="14" textLength="32" lengthAdjust="spacingAndGlyphs">3,3K</text>
<text x="462" y="446" font-size="14" textLength="27" lengthAdjust="spacingAndGlyphs">R10</text>
<text x="464" y="446" font-size="14" textLength="32" lengthAdjust="spacingAndGlyphs">3,3K</text>
<text x="462" y="481" font-size="14" textLength="18" lengthAdjust="spacingAndGlyphs">R7</text>
<text x="464" y="481" font-size="14" textLength="32" lengthAdjust="spacingAndGlyphs">3,3K</text>
<text x="462" y="517" font-size="14" textLength="32" lengthAdjust="spacingAndGlyphs">3, 3K</text>
<text x="518" y="438" font-size="17" transform="rotate(-90 518 438)" textLength="62" lengthAdjust="spacingAndGlyphs">PC847</text>
<text x="614" y="525" font-size="14" textLength="18" lengthAdjust="spacingAndGlyphs">R6</text>
<text x="614" y="558.5" font-size="14" textLength="18" lengthAdjust="spacingAndGlyphs">R5</text>
<text x="616" y="558.5" font-size="14" textLength="32" lengthAdjust="spacingAndGlyphs">3,3K</text>
<text x="614" y="593.5" font-size="14" textLength="18" lengthAdjust="spacingAndGlyphs">R4</text>
<text x="616" y="593.5" font-size="14" textLength="32" lengthAdjust="spacingAndGlyphs">3,3K</text>
<text x="614" y="628.5" font-size="14" textLength="18" lengthAdjust="spacingAndGlyphs">R3</text>
<text x="616" y="628.5" font-size="14" textLength="32" lengthAdjust="spacingAndGlyphs">3,3K</text>
<text x="614" y="664.5" font-size="14" textLength="32" lengthAdjust="spacingAndGlyphs">3, 3K</text>
<text x="667" y="586" font-size="17" transform="rotate(-90 667 586)" textLength="62" lengthAdjust="spacingAndGlyphs">PC847</text>
<text x="764" y="669" font-size="14" textLength="18" lengthAdjust="spacingAndGlyphs">R2</text>
<text x="764" y="702.6" font-size="14" textLength="18" lengthAdjust="spacingAndGlyphs">R1</text>
<text x="766" y="702.6" font-size="14" textLength="32" lengthAdjust="spacingAndGlyphs">3,3K</text>
<text x="764" y="737.5" font-size="14" textLength="18" lengthAdjust="spacingAndGlyphs">R9</text>
<text x="766" y="737.5" font-size="14" textLength="32" lengthAdjust="spacingAndGlyphs">3,3K</text>
<text x="764" y="772.5" font-size="14" textLength="18" lengthAdjust="spacingAndGlyphs">R8</text>
<text x="766" y="772.5" font-size="14" textLength="32" lengthAdjust="spacingAndGlyphs">3,3K</text>
<text x="764" y="808.5" font-size="14" textLength="32" lengthAdjust="spacingAndGlyphs">3, 3K</text>
<text x="816" y="730" font-size="17" transform="rotate(-90 816 730)" textLength="62" lengthAdjust="spacingAndGlyphs">PC847</text>
<text x="609" y="408" font-size="17" transform="rotate(-90 609 408)" textLength="36" lengthAdjust="spacingAndGlyphs">IC2</text>
<text x="759" y="556" font-size="17" transform="rotate(-90 759 556)" textLength="34" lengthAdjust="spacingAndGlyphs">IC5</text>
<text x="906" y="699" font-size="17" transform="rotate(-90 906 699)" textLength="36" lengthAdjust="spacingAndGlyphs">IC6</text>
<text x="1126" y="797" font-size="14" textLength="32" lengthAdjust="spacingAndGlyphs">3, 3K</text>
<text x="1132" y="830" font-size="14" textLength="26" lengthAdjust="spacingAndGlyphs">R17</text>
<path d="M1109,803.56 L1113.06,799.5 L1118.94,799.5 L1123,803.56 L1123,809.44 L1118.94,813.5 L1113.06,813.5 L1109,809.44 Z" fill="#a9c2a6"/>
<path d="M1162,803.56 L1166.06,799.5 L1171.94,799.5 L1176,803.56 L1176,809.44 L1171.94,813.5 L1166.06,813.5 L1162,809.44 Z" fill="#a9c2a6"/>
<rect x="1136" y="799.5" width="25" height="14" fill="#f2f6c6"/>
<line x1="1113" y1="806.0" x2="1171" y2="806.0" stroke="#2a3a2c" stroke-width="3.6"/>
<line x1="1114" y1="806.5" x2="1171" y2="806.5" stroke="#8a988a" stroke-width="2.4"/>
<rect x="1134" y="800.5" width="23" height="10.5" fill="url(#resg)"/>
<path d="M275.8,794.45 L280.15000000000003,790.1 L286.45,790.1 L290.8,794.45 L290.8,800.75 L286.45,805.1 L280.15000000000003,805.1 L275.8,800.75 Z" fill="#a9c2a6"/>
<path d="M333.0,796.45 L337.35,792.1 L343.65,792.1 L348.0,796.45 L348.0,802.75 L343.65,807.1 L337.35,807.1 L333.0,802.75 Z" fill="#a9c2a6"/>
<rect x="294" y="790" width="32" height="16" fill="#f2f6c6"/>
<path d="M283,797 L292,798 M323,799 L333,799 Q337,797 340,799" stroke="#8a988a" stroke-width="3" fill="none"/>
<rect x="291" y="792.8" width="33" height="14" rx="3" fill="#10261a"/>
<rect x="312" y="792.8" width="4" height="14" fill="#9aa49a"/>
<text x="368" y="752" font-size="18" transform="rotate(-90 368 752)" dx="0" dy="15" textLength="272" lengthAdjust="spacingAndGlyphs">Projekt 3 Leiter Rückmeldemodul</text>
<text x="389" y="752" font-size="18" transform="rotate(-90 389 752)" dy="15" textLength="228" lengthAdjust="spacingAndGlyphs">Uhlenbrock 63 350 Vers.1.0</text>
<text x="410" y="752" font-size="18" transform="rotate(-90 410 752)" dy="15" textLength="194" lengthAdjust="spacingAndGlyphs">Stand 3.7.2008 / Rohsa</text>
<text x="939" y="304" font-size="18" textLength="153" lengthAdjust="spacingAndGlyphs">Rückmelde 63 350</text>
<text x="918" y="280" font-size="12" transform="rotate(-90 918 280)" textLength="41" lengthAdjust="spacingAndGlyphs">Masse</text>
<text x="878" y="323.5" font-size="17" textLength="17" lengthAdjust="spacingAndGlyphs">K2</text>
<text x="286.5" y="789.5" font-size="17.5" textLength="23.5" lengthAdjust="spacingAndGlyphs">D33</text>
<text x="285" y="840.5" font-size="20" textLength="39.5" lengthAdjust="spacingAndGlyphs">1N4148</text>
<text x="257" y="827.3" font-size="19" textLength="15" lengthAdjust="spacingAndGlyphs">2V</text>
<path d="M1216,204.5 L1224,196.5 L1234,196.5 L1242,204.5 L1242,214.5 L1234,222.5 L1224,222.5 L1216,214.5 Z" fill="#a9c2a6"/>
<circle cx="1230.5" cy="209.5" r="9" fill="#555"/>
<circle cx="1228" cy="210.5" r="8.5" fill="#fffee9"/>
<path d="M1220,833 L1228,825 L1238,825 L1246,833 L1246,843 L1238,851 L1228,851 L1220,843 Z" fill="#a9c2a6"/>
<circle cx="1234.5" cy="838" r="9" fill="#555"/>
<circle cx="1232" cy="839" r="8.5" fill="#fffee9"/>
<text x="1254" y="268" font-size="15" fill="#0a2616" transform="rotate(-90 1254 268)" textLength="26" lengthAdjust="spacingAndGlyphs">MMD</text>
<text x="1251" y="269" font-size="15" fill="#0a2616" transform="rotate(-90 1251 269)" textLength="24" lengthAdjust="spacingAndGlyphs" opacity="0.8">ED_</text>
<text x="1254" y="305" font-size="15" fill="#0a2616" transform="rotate(-90 1254 305)" textLength="26" lengthAdjust="spacingAndGlyphs">MMD</text>
<text x="1251" y="306" font-size="15" fill="#0a2616" transform="rotate(-90 1251 306)" textLength="24" lengthAdjust="spacingAndGlyphs" opacity="0.8">ED_</text>
<text x="1254" y="342" font-size="15" fill="#0a2616" transform="rotate(-90 1254 342)" textLength="26" lengthAdjust="spacingAndGlyphs">MMD</text>
<text x="1251" y="343" font-size="15" fill="#0a2616" transform="rotate(-90 1251 343)" textLength="24" lengthAdjust="spacingAndGlyphs" opacity="0.8">ED_</text>
<text x="1254" y="379" font-size="15" fill="#0a2616" transform="rotate(-90 1254 379)" textLength="26" lengthAdjust="spacingAndGlyphs">MMD</text>
<text x="1251" y="380" font-size="15" fill="#0a2616" transform="rotate(-90 1251 380)" textLength="24" lengthAdjust="spacingAndGlyphs" opacity="0.8">ED_</text>
<text x="1254" y="416" font-size="15" fill="#0a2616" transform="rotate(-90 1254 416)" textLength="26" lengthAdjust="spacingAndGlyphs">MMD</text>
<text x="1251" y="417" font-size="15" fill="#0a2616" transform="rotate(-90 1251 417)" textLength="24" lengthAdjust="spacingAndGlyphs" opacity="0.8">ED_</text>
<text x="1254" y="453" font-size="15" fill="#0a2616" transform="rotate(-90 1254 453)" textLength="26" lengthAdjust="spacingAndGlyphs">MMD</text>
<text x="1251" y="454" font-size="15" fill="#0a2616" transform="rotate(-90 1251 454)" textLength="24" lengthAdjust="spacingAndGlyphs" opacity="0.8">ED_</text>
<text x="1254" y="490" font-size="15" fill="#0a2616" transform="rotate(-90 1254 490)" textLength="26" lengthAdjust="spacingAndGlyphs">MMD</text>
<text x="1251" y="491" font-size="15" fill="#0a2616" transform="rotate(-90 1251 491)" textLength="24" lengthAdjust="spacingAndGlyphs" opacity="0.8">ED_</text>
<text x="1254" y="527" font-size="15" fill="#0a2616" transform="rotate(-90 1254 527)" textLength="26" lengthAdjust="spacingAndGlyphs">MMD</text>
<text x="1251" y="528" font-size="15" fill="#0a2616" transform="rotate(-90 1251 528)" textLength="24" lengthAdjust="spacingAndGlyphs" opacity="0.8">ED_</text>
<text x="1254" y="564" font-size="15" fill="#0a2616" transform="rotate(-90 1254 564)" textLength="26" lengthAdjust="spacingAndGlyphs">MMD</text>
<text x="1251" y="565" font-size="15" fill="#0a2616" transform="rotate(-90 1251 565)" textLength="24" lengthAdjust="spacingAndGlyphs" opacity="0.8">ED_</text>
<text x="1254" y="600.5" font-size="15" fill="#0a2616" transform="rotate(-90 1254 600.5)" textLength="26" lengthAdjust="spacingAndGlyphs">MMD</text>
<text x="1251" y="601.5" font-size="15" fill="#0a2616" transform="rotate(-90 1251 601.5)" textLength="24" lengthAdjust="spacingAndGlyphs" opacity="0.8">ED_</text>
<text x="1254" y="637.0" font-size="15" fill="#0a2616" transform="rotate(-90 1254 637.0)" textLength="26" lengthAdjust="spacingAndGlyphs">MMD</text>
<text x="1251" y="638.0" font-size="15" fill="#0a2616" transform="rotate(-90 1251 638.0)" textLength="24" lengthAdjust="spacingAndGlyphs" opacity="0.8">ED_</text>
<text x="1254" y="673.5" font-size="15" fill="#0a2616" transform="rotate(-90 1254 673.5)" textLength="26" lengthAdjust="spacingAndGlyphs">MMD</text>
<text x="1251" y="674.5" font-size="15" fill="#0a2616" transform="rotate(-90 1251 674.5)" textLength="24" lengthAdjust="spacingAndGlyphs" opacity="0.8">ED_</text>
<text x="1254" y="710.0" font-size="15" fill="#0a2616" transform="rotate(-90 1254 710.0)" textLength="26" lengthAdjust="spacingAndGlyphs">MMD</text>
<text x="1251" y="711.0" font-size="15" fill="#0a2616" transform="rotate(-90 1251 711.0)" textLength="24" lengthAdjust="spacingAndGlyphs" opacity="0.8">ED_</text>
<text x="1254" y="746.5" font-size="15" fill="#0a2616" transform="rotate(-90 1254 746.5)" textLength="26" lengthAdjust="spacingAndGlyphs">MMD</text>
<text x="1251" y="747.5" font-size="15" fill="#0a2616" transform="rotate(-90 1251 747.5)" textLength="24" lengthAdjust="spacingAndGlyphs" opacity="0.8">ED_</text>
<text x="1254" y="783.0" font-size="15" fill="#0a2616" transform="rotate(-90 1254 783.0)" textLength="26" lengthAdjust="spacingAndGlyphs">MMD</text>
<text x="1251" y="784.0" font-size="15" fill="#0a2616" transform="rotate(-90 1251 784.0)" textLength="24" lengthAdjust="spacingAndGlyphs" opacity="0.8">ED_</text>
<text x="1254" y="819.5" font-size="15" fill="#0a2616" transform="rotate(-90 1254 819.5)" textLength="26" lengthAdjust="spacingAndGlyphs">MMD</text>
<text x="1251" y="820.5" font-size="15" fill="#0a2616" transform="rotate(-90 1251 820.5)" textLength="24" lengthAdjust="spacingAndGlyphs" opacity="0.8">ED_</text>
<text x="1257" y="223" font-size="22" fill="#0c2a18" transform="rotate(-90 1257 223)" textLength="138" lengthAdjust="spacingAndGlyphs">LED_5MM_ROT, 27</text>
<text x="1257" y="228" font-size="22" fill="#0c2a18" transform="rotate(-90 1257 228)" textLength="80" lengthAdjust="spacingAndGlyphs" opacity="0.7">D5MM_ROT</text>
<rect x="1207" y="234.0" width="21" height="27.5" rx="4" fill="#a9c2a6"/>
<rect x="1209" y="247.0" width="19" height="3" fill="#0b7b4c"/>
<path d="M1226.5,241.0 L1215,241.0 Q1208.5,241.0 1208.5,249.0 Q1208.5,257.0 1215,257.0 L1226.5,257.0" fill="none" stroke="#f2f6c6" stroke-width="1.8"/>
<line x1="1210.4" y1="240.8" x2="1198.7298947009103" y2="231.6916251324179" stroke="#f2f6c6" stroke-width="1.7"/>
<path d="M1194,228.0 L1200.8756518091284,238.69417655547306 L1206.0439269945134,232.07232397419847 Z" fill="#f2f6c6"/>
<line x1="1204.8" y1="251.0" x2="1190.6900766550768" y2="239.74208243756124" stroke="#f2f6c6" stroke-width="1.7"/>
<path d="M1186,236.0 L1192.7606956038605,246.76721853367619 L1197.9996110164464,240.20111121656876 Z" fill="#f2f6c6"/>
<rect x="1207" y="269.12" width="21" height="27.5" rx="4" fill="#a9c2a6"/>
<rect x="1209" y="282.12" width="19" height="3" fill="#0b7b4c"/>
<path d="M1226.5,276.12 L1215,276.12 Q1208.5,276.12 1208.5,284.12 Q1208.5,292.12 1215,292.12 L1226.5,292.12" fill="none" stroke="#f2f6c6" stroke-width="1.8"/>
<line x1="1210.4" y1="275.92" x2="1198.7298947009103" y2="266.8116251324179" stroke="#f2f6c6" stroke-width="1.7"/>
<path d="M1194,263.12 L1200.8756518091284,273.8141765554731 L1206.0439269945134,267.1923239741985 Z" fill="#f2f6c6"/>
<line x1="1204.8" y1="286.12" x2="1190.6900766550768" y2="274.86208243756124" stroke="#f2f6c6" stroke-width="1.7"/>
<path d="M1186,271.12 L1192.7606956038605,281.8872185336762 L1197.9996110164464,275.32111121656874 Z" fill="#f2f6c6"/>
<rect x="1207" y="304.24" width="21" height="27.5" rx="4" fill="#a9c2a6"/>
<rect x="1209" y="317.24" width="19" height="3" fill="#0b7b4c"/>
<path d="M1226.5,311.24 L1215,311.24 Q1208.5,311.24 1208.5,319.24 Q1208.5,327.24 1215,327.24 L1226.5,327.24" fill="none" stroke="#f2f6c6" stroke-width="1.8"/>
<line x1="1210.4" y1="311.04" x2="1198.7298947009103" y2="301.9316251324179" stroke="#f2f6c6" stroke-width="1.7"/>
<path d="M1194,298.24 L1200.8756518091284,308.93417655547313 L1206.0439269945134,302.3123239741985 Z" fill="#f2f6c6"/>
<line x1="1204.8" y1="321.24" x2="1190.6900766550768" y2="309.98208243756125" stroke="#f2f6c6" stroke-width="1.7"/>
<path d="M1186,306.24 L1192.7606956038605,317.0072185336762 L1197.9996110164464,310.44111121656874 Z" fill="#f2f6c6"/>
<rect x="1207" y="339.36" width="21" height="27.5" rx="4" fill="#a9c2a6"/>
<rect x="1209" y="352.36" width="19" height="3" fill="#0b7b4c"/>
<path d="M1226.5,346.36 L1215,346.36 Q1208.5,346.36 1208.5,354.36 Q1208.5,362.36 1215,362.36 L1226.5,362.36" fill="none" stroke="#f2f6c6" stroke-width="1.8"/>
<line x1="1210.4" y1="346.16" x2="1198.7298947009103" y2="337.0516251324179" stroke="#f2f6c6" stroke-width="1.7"/>
<path d="M1194,333.36 L1200.8756518091284,344.05417655547313 L1206.0439269945134,337.4323239741985 Z" fill="#f2f6c6"/>
<line x1="1204.8" y1="356.36" x2="1190.6900766550768" y2="345.10208243756125" stroke="#f2f6c6" stroke-width="1.7"/>
<path d="M1186,341.36 L1192.7606956038605,352.1272185336762 L1197.9996110164464,345.56111121656875 Z" fill="#f2f6c6"/>
<rect x="1207" y="374.48" width="21" height="27.5" rx="4" fill="#a9c2a6"/>
<rect x="1209" y="387.48" width="19" height="3" fill="#0b7b4c"/>
<path d="M1226.5,381.48 L1215,381.48 Q1208.5,381.48 1208.5,389.48 Q1208.5,397.48 1215,397.48 L1226.5,397.48" fill="none" stroke="#f2f6c6" stroke-width="1.8"/>
<line x1="1210.4" y1="381.28000000000003" x2="1198.7298947009103" y2="372.1716251324179" stroke="#f2f6c6" stroke-width="1.7"/>
<path d="M1194,368.48 L1200.8756518091284,379.17417655547314 L1206.0439269945134,372.5523239741985 Z" fill="#f2f6c6"/>
<line x1="1204.8" y1="391.48" x2="1190.6900766550768" y2="380.22208243756126" stroke="#f2f6c6" stroke-width="1.7"/>
<path d="M1186,376.48 L1192.7606956038605,387.24721853367623 L1197.9996110164464,380.68111121656875 Z" fill="#f2f6c6"/>
<rect x="1207" y="409.6" width="21" height="27.5" rx="4" fill="#a9c2a6"/>
<rect x="1209" y="422.6" width="19" height="3" fill="#0b7b4c"/>
<path d="M1226.5,416.6 L1215,416.6 Q1208.5,416.6 1208.5,424.6 Q1208.5,432.6 1215,432.6 L1226.5,432.6" fill="none" stroke="#f2f6c6" stroke-width="1.8"/>
<line x1="1210.4" y1="416.40000000000003" x2="1198.7298947009103" y2="407.2916251324179" stroke="#f2f6c6" stroke-width="1.7"/>
<path d="M1194,403.6 L1200.8756518091284,414.29417655547314 L1206.0439269945134,407.6723239741985 Z" fill="#f2f6c6"/>
<line x1="1204.8" y1="426.6" x2="1190.6900766550768" y2="415.34208243756126" stroke="#f2f6c6" stroke-width="1.7"/>
<path d="M1186,411.6 L1192.7606956038605,422.36721853367624 L1197.9996110164464,415.80111121656876 Z" fill="#f2f6c6"/>
<rect x="1207" y="444.71999999999997" width="21" height="27.5" rx="4" fill="#a9c2a6"/>
<rect x="1209" y="457.71999999999997" width="19" height="3" fill="#0b7b4c"/>
<path d="M1226.5,451.71999999999997 L1215,451.71999999999997 Q1208.5,451.71999999999997 1208.5,459.71999999999997 Q1208.5,467.71999999999997 1215,467.71999999999997 L1226.5,467.71999999999997" fill="none" stroke="#f2f6c6" stroke-width="1.8"/>
<line x1="1210.4" y1="451.52" x2="1198.7298947009103" y2="442.41162513241784" stroke="#f2f6c6" stroke-width="1.7"/>
<path d="M1194,438.71999999999997 L1200.8756518091284,449.4141765554731 L1206.0439269945134,442.79232397419844 Z" fill="#f2f6c6"/>
<line x1="1204.8" y1="461.71999999999997" x2="1190.6900766550768" y2="450.4620824375612" stroke="#f2f6c6" stroke-width="1.7"/>
<path d="M1186,446.71999999999997 L1192.7606956038605,457.4872185336762 L1197.9996110164464,450.9211112165687 Z" fill="#f2f6c6"/>
<rect x="1207" y="479.84" width="21" height="27.5" rx="4" fill="#a9c2a6"/>
<rect x="1209" y="492.84" width="19" height="3" fill="#0b7b4c"/>
<path d="M1226.5,486.84 L1215,486.84 Q1208.5,486.84 1208.5,494.84 Q1208.5,502.84 1215,502.84 L1226.5,502.84" fill="none" stroke="#f2f6c6" stroke-width="1.8"/>
<line x1="1210.4" y1="486.64" x2="1198.7298947009103" y2="477.53162513241784" stroke="#f2f6c6" stroke-width="1.7"/>
<path d="M1194,473.84 L1200.8756518091284,484.5341765554731 L1206.0439269945134,477.91232397419844 Z" fill="#f2f6c6"/>
<line x1="1204.8" y1="496.84" x2="1190.6900766550768" y2="485.5820824375612" stroke="#f2f6c6" stroke-width="1.7"/>
<path d="M1186,481.84 L1192.7606956038605,492.6072185336762 L1197.9996110164464,486.0411112165687 Z" fill="#f2f6c6"/>
<rect x="1207" y="514.96" width="21" height="27.5" rx="4" fill="#a9c2a6"/>
<rect x="1209" y="527.96" width="19" height="3" fill="#0b7b4c"/>
<path d="M1226.5,521.96 L1215,521.96 Q1208.5,521.96 1208.5,529.96 Q1208.5,537.96 1215,537.96 L1226.5,537.96" fill="none" stroke="#f2f6c6" stroke-width="1.8"/>
<line x1="1210.4" y1="521.76" x2="1198.7298947009103" y2="512.651625132418" stroke="#f2f6c6" stroke-width="1.7"/>
<path d="M1194,508.96000000000004 L1200.8756518091284,519.6541765554731 L1206.0439269945134,513.0323239741984 Z" fill="#f2f6c6"/>
<line x1="1204.8" y1="531.96" x2="1190.6900766550768" y2="520.7020824375612" stroke="#f2f6c6" stroke-width="1.7"/>
<path d="M1186,516.96 L1192.7606956038605,527.7272185336763 L1197.9996110164464,521.1611112165688 Z" fill="#f2f6c6"/>
<rect x="1207" y="550.0799999999999" width="21" height="27.5" rx="4" fill="#a9c2a6"/>
<rect x="1209" y="563.0799999999999" width="19" height="3" fill="#0b7b4c"/>
<path d="M1226.5,557.0799999999999 L1215,557.0799999999999 Q1208.5,557.0799999999999 1208.5,565.0799999999999 Q1208.5,573.0799999999999 1215,573.0799999999999 L1226.5,573.0799999999999" fill="none" stroke="#f2f6c6" stroke-width="1.8"/>
<line x1="1210.4" y1="556.8799999999999" x2="1198.7298947009103" y2="547.7716251324179" stroke="#f2f6c6" stroke-width="1.7"/>
<path d="M1194,544.0799999999999 L1200.8756518091284,554.774176555473 L1206.0439269945134,548.1523239741983 Z" fill="#f2f6c6"/>
<line x1="1204.8" y1="567.0799999999999" x2="1190.6900766550768" y2="555.8220824375611" stroke="#f2f6c6" stroke-width="1.7"/>
<path d="M1186,552.0799999999999 L1192.7606956038605,562.8472185336761 L1197.9996110164464,556.2811112165687 Z" fill="#f2f6c6"/>
<rect x="1207" y="585.2" width="21" height="27.5" rx="4" fill="#a9c2a6"/>
<rect x="1209" y="598.2" width="19" height="3" fill="#0b7b4c"/>
<path d="M1226.5,592.2 L1215,592.2 Q1208.5,592.2 1208.5,600.2 Q1208.5,608.2 1215,608.2 L1226.5,608.2" fill="none" stroke="#f2f6c6" stroke-width="1.8"/>
<line x1="1210.4" y1="592.0" x2="1198.7298947009103" y2="582.891625132418" stroke="#f2f6c6" stroke-width="1.7"/>
<path d="M1194,579.2 L1200.8756518091284,589.8941765554731 L1206.0439269945134,583.2723239741985 Z" fill="#f2f6c6"/>
<line x1="1204.8" y1="602.2" x2="1190.6900766550768" y2="590.9420824375612" stroke="#f2f6c6" stroke-width="1.7"/>
<path d="M1186,587.2 L1192.7606956038605,597.9672185336763 L1197.9996110164464,591.4011112165688 Z" fill="#f2f6c6"/>
<rect x="1207" y="620.3199999999999" width="21" height="27.5" rx="4" fill="#a9c2a6"/>
<rect x="1209" y="633.3199999999999" width="19" height="3" fill="#0b7b4c"/>
<path d="M1226.5,627.3199999999999 L1215,627.3199999999999 Q1208.5,627.3199999999999 1208.5,635.3199999999999 Q1208.5,643.3199999999999 1215,643.3199999999999 L1226.5,643.3199999999999" fill="none" stroke="#f2f6c6" stroke-width="1.8"/>
<line x1="1210.4" y1="627.1199999999999" x2="1198.7298947009103" y2="618.0116251324179" stroke="#f2f6c6" stroke-width="1.7"/>
<path d="M1194,614.3199999999999 L1200.8756518091284,625.014176555473 L1206.0439269945134,618.3923239741983 Z" fill="#f2f6c6"/>
<line x1="1204.8" y1="637.3199999999999" x2="1190.6900766550768" y2="626.0620824375611" stroke="#f2f6c6" stroke-width="1.7"/>
<path d="M1186,622.3199999999999 L1192.7606956038605,633.0872185336762 L1197.9996110164464,626.5211112165687 Z" fill="#f2f6c6"/>
<rect x="1207" y="655.4399999999999" width="21" height="27.5" rx="4" fill="#a9c2a6"/>
<rect x="1209" y="668.4399999999999" width="19" height="3" fill="#0b7b4c"/>
<path d="M1226.5,662.4399999999999 L1215,662.4399999999999 Q1208.5,662.4399999999999 1208.5,670.4399999999999 Q1208.5,678.4399999999999 1215,678.4399999999999 L1226.5,678.4399999999999" fill="none" stroke="#f2f6c6" stroke-width="1.8"/>
<line x1="1210.4" y1="662.2399999999999" x2="1198.7298947009103" y2="653.1316251324179" stroke="#f2f6c6" stroke-width="1.7"/>
<path d="M1194,649.4399999999999 L1200.8756518091284,660.134176555473 L1206.0439269945134,653.5123239741984 Z" fill="#f2f6c6"/>
<line x1="1204.8" y1="672.4399999999999" x2="1190.6900766550768" y2="661.1820824375611" stroke="#f2f6c6" stroke-width="1.7"/>
<path d="M1186,657.4399999999999 L1192.7606956038605,668.2072185336762 L1197.9996110164464,661.6411112165687 Z" fill="#f2f6c6"/>
<rect x="1207" y="690.56" width="21" height="27.5" rx="4" fill="#a9c2a6"/>
<rect x="1209" y="703.56" width="19" height="3" fill="#0b7b4c"/>
<path d="M1226.5,697.56 L1215,697.56 Q1208.5,697.56 1208.5,705.56 Q1208.5,713.56 1215,713.56 L1226.5,713.56" fill="none" stroke="#f2f6c6" stroke-width="1.8"/>
<line x1="1210.4" y1="697.3599999999999" x2="1198.7298947009103" y2="688.2516251324179" stroke="#f2f6c6" stroke-width="1.7"/>
<path d="M1194,684.56 L1200.8756518091284,695.254176555473 L1206.0439269945134,688.6323239741984 Z" fill="#f2f6c6"/>
<line x1="1204.8" y1="707.56" x2="1190.6900766550768" y2="696.3020824375611" stroke="#f2f6c6" stroke-width="1.7"/>
<path d="M1186,692.56 L1192.7606956038605,703.3272185336762 L1197.9996110164464,696.7611112165687 Z" fill="#f2f6c6"/>
<rect x="1207" y="725.68" width="21" height="27.5" rx="4" fill="#a9c2a6"/>
<rect x="1209" y="738.68" width="19" height="3" fill="#0b7b4c"/>
<path d="M1226.5,732.68 L1215,732.68 Q1208.5,732.68 1208.5,740.68 Q1208.5,748.68 1215,748.68 L1226.5,748.68" fill="none" stroke="#f2f6c6" stroke-width="1.8"/>
<line x1="1210.4" y1="732.4799999999999" x2="1198.7298947009103" y2="723.3716251324179" stroke="#f2f6c6" stroke-width="1.7"/>
<path d="M1194,719.68 L1200.8756518091284,730.374176555473 L1206.0439269945134,723.7523239741984 Z" fill="#f2f6c6"/>
<line x1="1204.8" y1="742.68" x2="1190.6900766550768" y2="731.4220824375611" stroke="#f2f6c6" stroke-width="1.7"/>
<path d="M1186,727.68 L1192.7606956038605,738.4472185336762 L1197.9996110164464,731.8811112165687 Z" fill="#f2f6c6"/>
<rect x="1207" y="760.8" width="21" height="27.5" rx="4" fill="#a9c2a6"/>
<rect x="1209" y="773.8" width="19" height="3" fill="#0b7b4c"/>
<path d="M1226.5,767.8 L1215,767.8 Q1208.5,767.8 1208.5,775.8 Q1208.5,783.8 1215,783.8 L1226.5,783.8" fill="none" stroke="#f2f6c6" stroke-width="1.8"/>
<line x1="1210.4" y1="767.5999999999999" x2="1198.7298947009103" y2="758.4916251324179" stroke="#f2f6c6" stroke-width="1.7"/>
<path d="M1194,754.8 L1200.8756518091284,765.494176555473 L1206.0439269945134,758.8723239741984 Z" fill="#f2f6c6"/>
<line x1="1204.8" y1="777.8" x2="1190.6900766550768" y2="766.5420824375611" stroke="#f2f6c6" stroke-width="1.7"/>
<path d="M1186,762.8 L1192.7606956038605,773.5672185336762 L1197.9996110164464,767.0011112165687 Z" fill="#f2f6c6"/>
<rect x="1207" y="795.92" width="21" height="27.5" rx="4" fill="#a9c2a6"/>
<rect x="1209" y="808.92" width="19" height="3" fill="#0b7b4c"/>
<path d="M1226.5,802.92 L1215,802.92 Q1208.5,802.92 1208.5,810.92 Q1208.5,818.92 1215,818.92 L1226.5,818.92" fill="none" stroke="#f2f6c6" stroke-width="1.8"/>
<line x1="1210.4" y1="802.7199999999999" x2="1198.7298947009103" y2="793.6116251324179" stroke="#f2f6c6" stroke-width="1.7"/>
<path d="M1194,789.92 L1200.8756518091284,800.614176555473 L1206.0439269945134,793.9923239741984 Z" fill="#f2f6c6"/>
<line x1="1204.8" y1="812.92" x2="1190.6900766550768" y2="801.6620824375611" stroke="#f2f6c6" stroke-width="1.7"/>
<path d="M1186,797.92 L1192.7606956038605,808.6872185336762 L1197.9996110164464,802.1211112165687 Z" fill="#f2f6c6"/>
<line x1="1216" y1="243.0" x2="1234" y2="228.1" stroke="#56655a" stroke-width="4"/>
<line x1="1216" y1="255.0" x2="1234" y2="238.1" stroke="#56655a" stroke-width="4"/>
<line x1="1216" y1="278.12" x2="1234" y2="265.3375" stroke="#56655a" stroke-width="4"/>
<line x1="1216" y1="290.12" x2="1234" y2="275.3375" stroke="#56655a" stroke-width="4"/>
<line x1="1216" y1="313.24" x2="1234" y2="302.575" stroke="#56655a" stroke-width="4"/>
<line x1="1216" y1="325.24" x2="1234" y2="312.575" stroke="#56655a" stroke-width="4"/>
<line x1="1216" y1="348.36" x2="1234" y2="339.8125" stroke="#56655a" stroke-width="4"/>
<line x1="1216" y1="360.36" x2="1234" y2="349.8125" stroke="#56655a" stroke-width="4"/>
<line x1="1216" y1="383.48" x2="1234" y2="377.05" stroke="#56655a" stroke-width="4"/>
<line x1="1216" y1="395.48" x2="1234" y2="387.05" stroke="#56655a" stroke-width="4"/>
<line x1="1216" y1="418.6" x2="1234" y2="414.2875" stroke="#56655a" stroke-width="4"/>
<line x1="1216" y1="430.6" x2="1234" y2="424.2875" stroke="#56655a" stroke-width="4"/>
<line x1="1216" y1="453.71999999999997" x2="1234" y2="451.525" stroke="#56655a" stroke-width="4"/>
<line x1="1216" y1="465.71999999999997" x2="1234" y2="461.525" stroke="#56655a" stroke-width="4"/>
<line x1="1216" y1="488.84" x2="1234" y2="488.7625" stroke="#56655a" stroke-width="4"/>
<line x1="1216" y1="500.84" x2="1234" y2="498.7625" stroke="#56655a" stroke-width="4"/>
<line x1="1216" y1="523.96" x2="1234" y2="526.0" stroke="#56655a" stroke-width="4"/>
<line x1="1216" y1="535.96" x2="1234" y2="536.0" stroke="#56655a" stroke-width="4"/>
<line x1="1216" y1="559.0799999999999" x2="1234" y2="562.7375" stroke="#56655a" stroke-width="4"/>
<line x1="1216" y1="571.0799999999999" x2="1234" y2="572.7375" stroke="#56655a" stroke-width="4"/>
<line x1="1216" y1="594.2" x2="1234" y2="599.475" stroke="#56655a" stroke-width="4"/>
<line x1="1216" y1="606.2" x2="1234" y2="609.475" stroke="#56655a" stroke-width="4"/>
<line x1="1216" y1="629.3199999999999" x2="1234" y2="636.2125" stroke="#56655a" stroke-width="4"/>
<line x1="1216" y1="641.3199999999999" x2="1234" y2="646.2125" stroke="#56655a" stroke-width="4"/>
<line x1="1216" y1="664.4399999999999" x2="1234" y2="672.95" stroke="#56655a" stroke-width="4"/>
<line x1="1216" y1="676.4399999999999" x2="1234" y2="682.95" stroke="#56655a" stroke-width="4"/>
<line x1="1216" y1="699.56" x2="1234" y2="709.6875" stroke="#56655a" stroke-width="4"/>
<line x1="1216" y1="711.56" x2="1234" y2="719.6875" stroke="#56655a" stroke-width="4"/>
<line x1="1216" y1="734.68" x2="1234" y2="746.425" stroke="#56655a" stroke-width="4"/>
<line x1="1216" y1="746.68" x2="1234" y2="756.425" stroke="#56655a" stroke-width="4"/>
<line x1="1216" y1="769.8" x2="1234" y2="783.1625" stroke="#56655a" stroke-width="4"/>
<line x1="1216" y1="781.8" x2="1234" y2="793.1625" stroke="#56655a" stroke-width="4"/>
<line x1="1216" y1="804.92" x2="1234" y2="819.9" stroke="#56655a" stroke-width="4"/>
<line x1="1216" y1="816.92" x2="1234" y2="829.9" stroke="#56655a" stroke-width="4"/>
<g transform="translate(1243,235) rotate(-19.00)"><path d="M-14,-11 L7,-11 A11,11 0 0 1 7,11 L-14,11 A4,11 0 0 1 -14,-11 Z" fill="url(#ledb)"/><ellipse cx="8" cy="0" rx="11" ry="11" fill="url(#ledd)"/><path d="M-10,-10.5 A4.5,10.5 0 0 0 -10,10.5" fill="none" stroke="#ff3a20" stroke-width="1"/></g>
<g transform="translate(1243,272) rotate(-16.62)"><path d="M-14,-11 L7,-11 A11,11 0 0 1 7,11 L-14,11 A4,11 0 0 1 -14,-11 Z" fill="url(#ledb)"/><ellipse cx="8" cy="0" rx="11" ry="11" fill="url(#ledd)"/><path d="M-10,-10.5 A4.5,10.5 0 0 0 -10,10.5" fill="none" stroke="#ff3a20" stroke-width="1"/></g>
<g transform="translate(1243,309) rotate(-14.25)"><path d="M-14,-11 L7,-11 A11,11 0 0 1 7,11 L-14,11 A4,11 0 0 1 -14,-11 Z" fill="url(#ledb)"/><ellipse cx="8" cy="0" rx="11" ry="11" fill="url(#ledd)"/><path d="M-10,-10.5 A4.5,10.5 0 0 0 -10,10.5" fill="none" stroke="#ff3a20" stroke-width="1"/></g>
<g transform="translate(1243,346) rotate(-11.88)"><path d="M-14,-11 L7,-11 A11,11 0 0 1 7,11 L-14,11 A4,11 0 0 1 -14,-11 Z" fill="url(#ledb)"/><ellipse cx="8" cy="0" rx="11" ry="11" fill="url(#ledd)"/><path d="M-10,-10.5 A4.5,10.5 0 0 0 -10,10.5" fill="none" stroke="#ff3a20" stroke-width="1"/></g>
<g transform="translate(1243,383) rotate(-9.50)"><path d="M-14,-11 L7,-11 A11,11 0 0 1 7,11 L-14,11 A4,11 0 0 1 -14,-11 Z" fill="url(#ledb)"/><ellipse cx="8" cy="0" rx="11" ry="11" fill="url(#ledd)"/><path d="M-10,-10.5 A4.5,10.5 0 0 0 -10,10.5" fill="none" stroke="#ff3a20" stroke-width="1"/></g>
<g transform="translate(1243,420) rotate(-7.12)"><path d="M-14,-11 L7,-11 A11,11 0 0 1 7,11 L-14,11 A4,11 0 0 1 -14,-11 Z" fill="url(#ledb)"/><ellipse cx="8" cy="0" rx="11" ry="11" fill="url(#ledd)"/><path d="M-10,-10.5 A4.5,10.5 0 0 0 -10,10.5" fill="none" stroke="#ff3a20" stroke-width="1"/></g>
<g transform="translate(1243,457) rotate(-4.75)"><path d="M-14,-11 L7,-11 A11,11 0 0 1 7,11 L-14,11 A4,11 0 0 1 -14,-11 Z" fill="url(#ledb)"/><ellipse cx="8" cy="0" rx="11" ry="11" fill="url(#ledd)"/><path d="M-10,-10.5 A4.5,10.5 0 0 0 -10,10.5" fill="none" stroke="#ff3a20" stroke-width="1"/></g>
<g transform="translate(1243,494) rotate(-2.38)"><path d="M-14,-11 L7,-11 A11,11 0 0 1 7,11 L-14,11 A4,11 0 0 1 -14,-11 Z" fill="url(#ledb)"/><ellipse cx="8" cy="0" rx="11" ry="11" fill="url(#ledd)"/><path d="M-10,-10.5 A4.5,10.5 0 0 0 -10,10.5" fill="none" stroke="#ff3a20" stroke-width="1"/></g>
<g transform="translate(1243,531) rotate(0.00)"><path d="M-14,-11 L7,-11 A11,11 0 0 1 7,11 L-14,11 A4,11 0 0 1 -14,-11 Z" fill="url(#ledb)"/><ellipse cx="8" cy="0" rx="11" ry="11" fill="url(#ledd)"/><path d="M-10,-10.5 A4.5,10.5 0 0 0 -10,10.5" fill="none" stroke="#ff3a20" stroke-width="1"/></g>
<g transform="translate(1243,567.5) rotate(2.38)"><path d="M-14,-11 L7,-11 A11,11 0 0 1 7,11 L-14,11 A4,11 0 0 1 -14,-11 Z" fill="url(#ledb)"/><ellipse cx="8" cy="0" rx="11" ry="11" fill="url(#ledd)"/><path d="M-10,-10.5 A4.5,10.5 0 0 0 -10,10.5" fill="none" stroke="#ff3a20" stroke-width="1"/></g>
<g transform="translate(1243,604.0) rotate(4.75)"><path d="M-14,-11 L7,-11 A11,11 0 0 1 7,11 L-14,11 A4,11 0 0 1 -14,-11 Z" fill="url(#ledb)"/><ellipse cx="8" cy="0" rx="11" ry="11" fill="url(#ledd)"/><path d="M-10,-10.5 A4.5,10.5 0 0 0 -10,10.5" fill="none" stroke="#ff3a20" stroke-width="1"/></g>
<g transform="translate(1243,640.5) rotate(7.12)"><path d="M-14,-11 L7,-11 A11,11 0 0 1 7,11 L-14,11 A4,11 0 0 1 -14,-11 Z" fill="url(#ledb)"/><ellipse cx="8" cy="0" rx="11" ry="11" fill="url(#ledd)"/><path d="M-10,-10.5 A4.5,10.5 0 0 0 -10,10.5" fill="none" stroke="#ff3a20" stroke-width="1"/></g>
<g transform="translate(1243,677.0) rotate(9.50)"><path d="M-14,-11 L7,-11 A11,11 0 0 1 7,11 L-14,11 A4,11 0 0 1 -14,-11 Z" fill="url(#ledb)"/><ellipse cx="8" cy="0" rx="11" ry="11" fill="url(#ledd)"/><path d="M-10,-10.5 A4.5,10.5 0 0 0 -10,10.5" fill="none" stroke="#ff3a20" stroke-width="1"/></g>
<g transform="translate(1243,713.5) rotate(11.88)"><path d="M-14,-11 L7,-11 A11,11 0 0 1 7,11 L-14,11 A4,11 0 0 1 -14,-11 Z" fill="url(#ledb)"/><ellipse cx="8" cy="0" rx="11" ry="11" fill="url(#ledd)"/><path d="M-10,-10.5 A4.5,10.5 0 0 0 -10,10.5" fill="none" stroke="#ff3a20" stroke-width="1"/></g>
<g transform="translate(1243,750.0) rotate(14.25)"><path d="M-14,-11 L7,-11 A11,11 0 0 1 7,11 L-14,11 A4,11 0 0 1 -14,-11 Z" fill="url(#ledb)"/><ellipse cx="8" cy="0" rx="11" ry="11" fill="url(#ledd)"/><path d="M-10,-10.5 A4.5,10.5 0 0 0 -10,10.5" fill="none" stroke="#ff3a20" stroke-width="1"/></g>
<g transform="translate(1243,786.5) rotate(16.62)"><path d="M-14,-11 L7,-11 A11,11 0 0 1 7,11 L-14,11 A4,11 0 0 1 -14,-11 Z" fill="url(#ledb)"/><ellipse cx="8" cy="0" rx="11" ry="11" fill="url(#ledd)"/><path d="M-10,-10.5 A4.5,10.5 0 0 0 -10,10.5" fill="none" stroke="#ff3a20" stroke-width="1"/></g>
<g transform="translate(1243,823.0) rotate(19.00)"><path d="M-14,-11 L7,-11 A11,11 0 0 1 7,11 L-14,11 A4,11 0 0 1 -14,-11 Z" fill="url(#ledb)"/><ellipse cx="8" cy="0" rx="11" ry="11" fill="url(#ledd)"/><path d="M-10,-10.5 A4.5,10.5 0 0 0 -10,10.5" fill="none" stroke="#ff3a20" stroke-width="1"/></g>
<text x="1186.5" y="261.0" font-size="19.5" transform="rotate(-90 1186.5 261.0)" textLength="36.9" lengthAdjust="spacingAndGlyphs" opacity="0.75">D17</text>
<text x="1186.5" y="296.12" font-size="19.5" transform="rotate(-90 1186.5 296.12)" textLength="36.9" lengthAdjust="spacingAndGlyphs" opacity="0.75">D16</text>
<text x="1186.5" y="331.24" font-size="19.5" transform="rotate(-90 1186.5 331.24)" textLength="36.9" lengthAdjust="spacingAndGlyphs" opacity="0.75">D15</text>
<text x="1186.5" y="366.36" font-size="19.5" transform="rotate(-90 1186.5 366.36)" textLength="36.9" lengthAdjust="spacingAndGlyphs" opacity="0.75">D13</text>
<text x="1186.5" y="401.48" font-size="19.5" transform="rotate(-90 1186.5 401.48)" textLength="36.9" lengthAdjust="spacingAndGlyphs" opacity="0.75">D12</text>
<text x="1186.5" y="436.6" font-size="19.5" transform="rotate(-90 1186.5 436.6)" textLength="36.9" lengthAdjust="spacingAndGlyphs" opacity="0.75">D11</text>
<text x="1186.5" y="471.71999999999997" font-size="19.5" transform="rotate(-90 1186.5 471.71999999999997)" textLength="36.9" lengthAdjust="spacingAndGlyphs" opacity="0.75">D10</text>
<text x="1186.5" y="506.84" font-size="19.5" transform="rotate(-90 1186.5 506.84)" textLength="24.6" lengthAdjust="spacingAndGlyphs" opacity="0.75">D8</text>
<text x="1186.5" y="541.96" font-size="19.5" transform="rotate(-90 1186.5 541.96)" textLength="24.6" lengthAdjust="spacingAndGlyphs" opacity="0.75">D7</text>
<text x="1186.5" y="577.0799999999999" font-size="19.5" transform="rotate(-90 1186.5 577.0799999999999)" textLength="24.6" lengthAdjust="spacingAndGlyphs" opacity="0.75">D6</text>
<text x="1186.5" y="612.2" font-size="19.5" transform="rotate(-90 1186.5 612.2)" textLength="24.6" lengthAdjust="spacingAndGlyphs" opacity="0.75">D5</text>
<text x="1186.5" y="647.3199999999999" font-size="19.5" transform="rotate(-90 1186.5 647.3199999999999)" textLength="24.6" lengthAdjust="spacingAndGlyphs" opacity="0.75">D4</text>
<text x="1186.5" y="682.4399999999999" font-size="19.5" transform="rotate(-90 1186.5 682.4399999999999)" textLength="24.6" lengthAdjust="spacingAndGlyphs" opacity="0.75">D2</text>
<text x="1186.5" y="717.56" font-size="19.5" transform="rotate(-90 1186.5 717.56)" textLength="24.6" lengthAdjust="spacingAndGlyphs" opacity="0.75">D1</text>
<text x="1186.5" y="752.68" font-size="19.5" transform="rotate(-90 1186.5 752.68)" textLength="36.9" lengthAdjust="spacingAndGlyphs" opacity="0.75">D18</text>
<text x="1186.5" y="787.8" font-size="19.5" transform="rotate(-90 1186.5 787.8)" textLength="24.6" lengthAdjust="spacingAndGlyphs" opacity="0.75">D3</text>
<text x="1186.5" y="822.92" font-size="19.5" transform="rotate(-90 1186.5 822.92)" textLength="36.9" lengthAdjust="spacingAndGlyphs" opacity="0.75">D34</text>
<text x="1184.0" y="263.0" font-size="15" textLength="15" lengthAdjust="spacingAndGlyphs">16</text>
<text x="1183.1875" y="298.12" font-size="15" textLength="15" lengthAdjust="spacingAndGlyphs">15</text>
<text x="1182.375" y="333.24" font-size="15" textLength="15" lengthAdjust="spacingAndGlyphs">14</text>
<text x="1181.5625" y="368.36" font-size="15" textLength="15" lengthAdjust="spacingAndGlyphs">13</text>
<text x="1180.75" y="403.48" font-size="15" textLength="15" lengthAdjust="spacingAndGlyphs">12</text>
<text x="1179.9375" y="438.6" font-size="15" textLength="15" lengthAdjust="spacingAndGlyphs">11</text>
<text x="1179.125" y="473.71999999999997" font-size="15" textLength="15" lengthAdjust="spacingAndGlyphs">10</text>
<text x="1186.3125" y="508.84" font-size="15" textLength="7" lengthAdjust="spacingAndGlyphs">9</text>
<text x="1185.5" y="543.96" font-size="15" textLength="7" lengthAdjust="spacingAndGlyphs">8</text>
<text x="1185.7142857142858" y="579.0799999999999" font-size="15" textLength="7" lengthAdjust="spacingAndGlyphs">7</text>
<text x="1185.9285714285713" y="614.2" font-size="15" textLength="7" lengthAdjust="spacingAndGlyphs">6</text>
<text x="1186.142857142857" y="649.3199999999999" font-size="15" textLength="7" lengthAdjust="spacingAndGlyphs">5</text>
<text x="1186.357142857143" y="684.4399999999999" font-size="15" textLength="7" lengthAdjust="spacingAndGlyphs">4</text>
<text x="1186.5714285714287" y="719.56" font-size="15" textLength="7" lengthAdjust="spacingAndGlyphs">3</text>
<text x="1186.7857142857142" y="754.68" font-size="15" textLength="7" lengthAdjust="spacingAndGlyphs">2</text>
<text x="1187.0" y="789.8" font-size="15" textLength="7" lengthAdjust="spacingAndGlyphs">1</text>
</svg>
<div class="abs" style="left:0;top:0;width:1280px;height:26px;background:linear-gradient(#3d95ff 0px,#2a82f8 1.5px,#0068ee 2.5px,#0058e4 5px,#0053dd 9px,#0055e0 13px,#0062f6 17px,#0066fc 21px,#0060f0 23px,#0045c8 25px,#0038b0 26px);"></div>
<svg class="abs" style="left:0;top:2px" width="20" height="20"><defs><radialGradient id="ic" cx="0.38" cy="0.42" r="0.62"><stop offset="0" stop-color="#ffd040"/><stop offset="0.55" stop-color="#f0a020"/><stop offset="1" stop-color="#c06818"/></radialGradient></defs><path d="M4,5 Q9,1.5 15,4 Q18,8 17,12 Q15,17.5 10,18.5 Q5,17 3,12 Q2,8 4,5 Z" fill="url(#ic)" stroke="#2a2a40" stroke-width="0.7"/><ellipse cx="9.5" cy="6.5" rx="2.3" ry="1" fill="#6a4010"/><path d="M12,10 Q15,10 16,12 Q14,14 12.5,13 Z" fill="#8a1a08" opacity="0.8"/><ellipse cx="5.5" cy="11" rx="2" ry="1.5" fill="#ffe060" opacity="0.8"/></svg>
<div class="abs ttl">3D-Modell&nbsp; [Y:\Leiterplatten-projekte\serien-platinen-stand16-04-2008-gesichert-auf-cd\Serie_s88_ohne_opto_mit_led_Vers.3.0\uhlenbr63350_eurokarte-opto1.T3001]</div>
<div class="abs" style="left:1211px;top:2px;width:21px;height:21px;box-sizing:border-box;border:1px solid #fff;border-radius:3px;background:radial-gradient(circle at 25% 20%,#7fa8ff 0,#3a74f2 35%,#1d58e6 70%,#1a4fd4 100%);"></div><div class="abs" style="left:1217px;top:15px;width:7px;height:3px;background:#fff"></div>
<div class="abs" style="left:1234px;top:2px;width:21px;height:21px;box-sizing:border-box;border:1px solid #fff;border-radius:3px;background:radial-gradient(circle at 25% 20%,#7fa8ff 0,#3a74f2 35%,#1d58e6 70%,#1a4fd4 100%);"></div><svg class="abs" style="left:1234px;top:2px" width="21" height="21"><rect x="5.5" y="10.5" width="6" height="5" stroke="#fff" stroke-width="1.6" fill="none"/><path d="M8.5,9.5 V6.5 H14.5 V12 H12.5" stroke="#fff" stroke-width="1.6" fill="none"/></svg>
<div class="abs" style="left:1257px;top:2px;width:21px;height:21px;box-sizing:border-box;border:1px solid #fff;border-radius:3px;background:radial-gradient(circle at 25% 20%,#ffa088 0,#e8664a 35%,#d8502e 70%,#c8401e 100%);"></div><svg class="abs" style="left:1257px;top:2px" width="21" height="21"><path d="M5.5,5.5 L15.5,15.5 M15.5,5.5 L5.5,15.5" stroke="#fff" stroke-width="2.2"/></svg>
<div class="abs" style="left:0;top:26px;width:1280px;height:31px;background:#ece9d8;"></div>
<div class="abs" style="left:0;top:26px;width:1280px;height:1px;background:#f8f7f0;"></div>
<div class="abs" style="left:42px;top:28px;width:24px;height:22px;box-sizing:border-box;border-top:1px solid #fff;border-left:1px solid #fff;border-right:2px solid #716f64;border-bottom:2px solid #716f64;background:#ece9d8"></div>
<svg class="abs" style="left:42px;top:28px" width="24" height="22"><path d="M10,5 L14,3 L17,5 L17,10 L13,12 L10,10 Z" fill="#2a2ad0"/><path d="M10,5 L14,3 L17,5 L13,7 Z" fill="#6a6aff"/><path d="M5,12 L9,10 L12,12 L12,17 L8,19 L5,17 Z" fill="#c01010"/><path d="M5,12 L9,10 L12,12 L8,14 Z" fill="#ff5050"/><path d="M12,12 L16,10 L19,12 L19,17 L15,19 L12,17 Z" fill="#10b020"/><path d="M12,12 L16,10 L19,12 L15,14 Z" fill="#60ff60"/></svg>
<div class="abs" style="left:80px;top:28px;width:25px;height:22px;box-sizing:border-box;border-top:1px solid #fff;border-left:1px solid #fff;border-right:2px solid #716f64;border-bottom:2px solid #716f64;background:#ece9d8"></div>
<svg class="abs" style="left:80px;top:28px" width="25" height="22"><path d="M12,3 L15,7 H13 V16 H15 L12,20 L9,16 H11 V7 H9 Z" fill="#0a1aa8"/><path d="M3,11.5 L7,8.5 V10.5 H19 V8.5 H20 V14.5 H19 V12.5 H7 V14.5 Z" fill="#0a1aa8"/><path d="M14,10 L18,5 M16,5 H19 M17,7 H18" stroke="#111" stroke-width="1.3"/><path d="M15,13 H20" stroke="#f4e040" stroke-width="1.2"/></svg>
<svg class="abs" style="left:121px;top:29px" width="20" height="20"><circle cx="10" cy="10" r="9.3" fill="#fff" opacity="0.7"/><circle cx="10" cy="10" r="8.3" fill="#3b68c0"/><path d="M7,7.5 A3,3 0 1 1 10.5,10 Q10,10.5 10,12.5" stroke="#fff" stroke-width="2.2" fill="none"/><circle cx="10" cy="15" r="1.3" fill="#fff"/></svg>
<div class="abs" style="left:0;top:57px;width:123px;height:936px;box-sizing:border-box;border:1px solid #7f9db9;background:#fff;"></div>
<div class="abs" style="left:2px;top:58px;width:102px;height:916px;overflow:hidden;">
<svg class="abs" style="left:0;top:0" width="102" height="916"><line x1="10.5" y1="0" x2="10.5" y2="245" stroke="#a0a0a0" stroke-width="1" stroke-dasharray="1,1"/><line x1="29.5" y1="0" x2="29.5" y2="233" stroke="#a0a0a0" stroke-width="1" stroke-dasharray="1,1"/><line x1="29.5" y1="256" x2="29.5" y2="905" stroke="#a0a0a0" stroke-width="1" stroke-dasharray="1,1"/><line x1="30" y1="9.5" x2="42" y2="9.5" stroke="#a0a0a0" stroke-width="1" stroke-dasharray="1,1"/><line x1="30" y1="25.5" x2="42" y2="25.5" stroke="#a0a0a0" stroke-width="1" stroke-dasharray="1,1"/><line x1="30" y1="41.5" x2="42" y2="41.5" stroke="#a0a0a0" stroke-width="1" stroke-dasharray="1,1"/><line x1="30" y1="57.5" x2="42" y2="57.5" stroke="#a0a0a0" stroke-width="1" stroke-dasharray="1,1"/><line x1="30" y1="73.5" x2="42" y2="73.5" stroke="#a0a0a0" stroke-width="1" stroke-dasharray="1,1"/><line x1="30" y1="89.5" x2="42" y2="89.5" stroke="#a0a0a0" stroke-width="1" stroke-dasharray="1,1"/><line x1="30" y1="105.5" x2="42" y2="105.5" stroke="#a0a0a0" stroke-width="1" stroke-dasharray="1,1"/><line x1="30" y1="121.5" x2="42" y2="121.5" stroke="#a0a0a0" stroke-width="1" stroke-dasharray="1,1"/><line x1="30" y1="137.5" x2="42" y2="137.5" stroke="#a0a0a0" stroke-width="1" stroke-dasharray="1,1"/><line x1="30" y1="153.5" x2="42" y2="153.5" stroke="#a0a0a0" stroke-width="1" stroke-dasharray="1,1"/><line x1="30" y1="169.5" x2="42" y2="169.5" stroke="#a0a0a0" stroke-width="1" stroke-dasharray="1,1"/><line x1="30" y1="185.5" x2="42" y2="185.5" stroke="#a0a0a0" stroke-width="1" stroke-dasharray="1,1"/><line x1="30" y1="201.5" x2="42" y2="201.5" stroke="#a0a0a0" stroke-width="1" stroke-dasharray="1,1"/><line x1="30" y1="217.5" x2="42" y2="217.5" stroke="#a0a0a0" stroke-width="1" stroke-dasharray="1,1"/><line x1="30" y1="233.5" x2="42" y2="233.5" stroke="#a0a0a0" stroke-width="1" stroke-dasharray="1,1"/><line x1="15" y1="249.5" x2="23" y2="249.5" stroke="#a0a0a0" stroke-width="1" stroke-dasharray="1,1"/><line x1="30" y1="265.5" x2="42" y2="265.5" stroke="#a0a0a0" stroke-width="1" stroke-dasharray="1,1"/><line x1="30" y1="281.5" x2="42" y2="281.5" stroke="#a0a0a0" stroke-width="1" stroke-dasharray="1,1"/><line x1="30" y1="297.5" x2="42" y2="297.5" stroke="#a0a0a0" stroke-width="1" stroke-dasharray="1,1"/><line x1="30" y1="313.5" x2="42" y2="313.5" stroke="#a0a0a0" stroke-width="1" stroke-dasharray="1,1"/><line x1="30" y1="329.5" x2="42" y2="329.5" stroke="#a0a0a0" stroke-width="1" stroke-dasharray="1,1"/><line x1="30" y1="345.5" x2="42" y2="345.5" stroke="#a0a0a0" stroke-width="1" stroke-dasharray="1,1"/><line x1="30" y1="361.5" x2="42" y2="361.5" stroke="#a0a0a0" stroke-width="1" stroke-dasharray="1,1"/><line x1="30" y1="377.5" x2="42" y2="377.5" stroke="#a0a0a0" stroke-width="1" stroke-dasharray="1,1"/><line x1="30" y1="393.5" x2="42" y2="393.5" stroke="#a0a0a0" stroke-width="1" stroke-dasharray="1,1"/><line x1="30" y1="409.5" x2="42" y2="409.5" stroke="#a0a0a0" stroke-width="1" stroke-dasharray="1,1"/><line x1="30" y1="425.5" x2="42" y2="425.5" stroke="#a0a0a0" stroke-width="1" stroke-dasharray="1,1"/><line x1="30" y1="441.5" x2="42" y2="441.5" stroke="#a0a0a0" stroke-width="1" stroke-dasharray="1,1"/><line x1="30" y1="457.5" x2="42" y2="457.5" stroke="#a0a0a0" stroke-width="1" stroke-dasharray="1,1"/><line x1="30" y1="473.5" x2="42" y2="473.5" stroke="#a0a0a0" stroke-width="1" stroke-dasharray="1,1"/><line x1="30" y1="489.5" x2="42" y2="489.5" stroke="#a0a0a0" stroke-width="1" stroke-dasharray="1,1"/><line x1="30" y1="505.5" x2="42" y2="505.5" stroke="#a0a0a0" stroke-width="1" stroke-dasharray="1,1"/><line x1="30" y1="521.5" x2="42" y2="521.5" stroke="#a0a0a0" stroke-width="1" stroke-dasharray="1,1"/><line x1="30" y1="537.5" x2="42" y2="537.5" stroke="#a0a0a0" stroke-width="1" stroke-dasharray="1,1"/><line x1="30" y1="553.5" x2="42" y2="553.5" stroke="#a0a0a0" stroke-width="1" stroke-dasharray="1,1"/><line x1="30" y1="569.5" x2="42" y2="569.5" stroke="#a0a0a0" stroke-width="1" stroke-dasharray="1,1"/><line x1="30" y1="585.5" x2="42" y2="585.5" stroke="#a0a0a0" stroke-width="1" stroke-dasharray="1,1"/><line x1="30" y1="601.5" x2="42" y2="601.5" stroke="#a0a0a0" stroke-width="1" stroke-dasharray="1,1"/><line x1="30" y1="617.5" x2="42" y2="617.5" stroke="#a0a0a0" stroke-width="1" stroke-dasharray="1,1"/><line x1="30" y1="633.5" x2="42" y2="633.5" stroke="#a0a0a0" stroke-width="1" stroke-dasharray="1,1"/><line x1="30" y1="649.5" x2="42" y2="649.5" stroke="#a0a0a0" stroke-width="1" stroke-dasharray="1,1"/><line x1="30" y1="665.5" x2="42" y2="665.5" stroke="#a0a0a0" stroke-width="1" stroke-dasharray="1,1"/><line x1="30" y1="681.5" x2="42" y2="681.5" stroke="#a0a0a0" stroke-width="1" stroke-dasharray="1,1"/><line x1="30" y1="697.5" x2="42" y2="697.5" stroke="#a0a0a0" stroke-width="1" stroke-dasharray="1,1"/><line x1="30" y1="713.5" x2="42" y2="713.5" stroke="#a0a0a0" stroke-width="1" stroke-dasharray="1,1"/><line x1="30" y1="729.5" x2="42" y2="729.5" stroke="#a0a0a0" stroke-width="1" stroke-dasharray="1,1"/><line x1="30" y1="745.5" x2="42" y2="745.5" stroke="#a0a0a0" stroke-width="1" stroke-dasharray="1,1"/><line x1="30" y1="761.5" x2="42" y2="761.5" stroke="#a0a0a0" stroke-width="1" stroke-dasharray="1,1"/><line x1="30" y1="777.5" x2="42" y2="777.5" stroke="#a0a0a0" stroke-width="1" stroke-dasharray="1,1"/><line x1="30" y1="793.5" x2="42" y2="793.5" stroke="#a0a0a0" stroke-width="1" stroke-dasharray="1,1"/><line x1="30" y1="809.5" x2="42" y2="809.5" stroke="#a0a0a0" stroke-width="1" stroke-dasharray="1,1"/><line x1="30" y1="825.5" x2="42" y2="825.5" stroke="#a0a0a0" stroke-width="1" stroke-dasharray="1,1"/><line x1="30" y1="841.5" x2="42" y2="841.5" stroke="#a0a0a0" stroke-width="1" stroke-dasharray="1,1"/><line x1="30" y1="857.5" x2="42" y2="857.5" stroke="#a0a0a0" stroke-width="1" stroke-dasharray="1,1"/><line x1="30" y1="873.5" x2="42" y2="873.5" stroke="#a0a0a0" stroke-width="1" stroke-dasharray="1,1"/><line x1="30" y1="889.5" x2="42" y2="889.5" stroke="#a0a0a0" stroke-width="1" stroke-dasharray="1,1"/><line x1="30" y1="905.5" x2="42" y2="905.5" stroke="#a0a0a0" stroke-width="1" stroke-dasharray="1,1"/></svg>
<div class="abs chk" style="left:43px;top:4px;"><svg width="12" height="12"><path d="M0.5,11.5 L0.5,0.5 L11.5,0.5" stroke="#2a2a2a" fill="none"/><path d="M11,1 L11,11 L1,11" stroke="#d4d0c8" fill="none"/><path d="M2.8,5.2 L5,8.6 L9.2,2.8" stroke="#000" stroke-width="2.1" fill="none"/></svg></div>
<div class="abs trow" style="left:60px;top:2px;">Sig$62</div>
<div class="abs chk" style="left:43px;top:20px;"><svg width="12" height="12"><path d="M0.5,11.5 L0.5,0.5 L11.5,0.5" stroke="#2a2a2a" fill="none"/><path d="M11,1 L11,11 L1,11" stroke="#d4d0c8" fill="none"/><path d="M2.8,5.2 L5,8.6 L9.2,2.8" stroke="#000" stroke-width="2.1" fill="none"/></svg></div>
<div class="abs trow" style="left:60px;top:18px;">Sig$63</div>
<div class="abs chk" style="left:43px;top:36px;"><svg width="12" height="12"><path d="M0.5,11.5 L0.5,0.5 L11.5,0.5" stroke="#2a2a2a" fill="none"/><path d="M11,1 L11,11 L1,11" stroke="#d4d0c8" fill="none"/><path d="M2.8,5.2 L5,8.6 L9.2,2.8" stroke="#000" stroke-width="2.1" fill="none"/></svg></div>
<div class="abs trow" style="left:60px;top:34px;">Sig$64</div>
<div class="abs chk" style="left:43px;top:52px;"><svg width="12" height="12"><path d="M0.5,11.5 L0.5,0.5 L11.5,0.5" stroke="#2a2a2a" fill="none"/><path d="M11,1 L11,11 L1,11" stroke="#d4d0c8" fill="none"/><path d="M2.8,5.2 L5,8.6 L9.2,2.8" stroke="#000" stroke-width="2.1" fill="none"/></svg></div>
<div class="abs trow" style="left:60px;top:50px;">Sig$65</div>
<div class="abs chk" style="left:43px;top:68px;"><svg width="12" height="12"><path d="M0.5,11.5 L0.5,0.5 L11.5,0.5" stroke="#2a2a2a" fill="none"/><path d="M11,1 L11,11 L1,11" stroke="#d4d0c8" fill="none"/><path d="M2.8,5.2 L5,8.6 L9.2,2.8" stroke="#000" stroke-width="2.1" fill="none"/></svg></div>
<div class="abs trow" style="left:60px;top:66px;">Sig$66</div>
<div class="abs chk" style="left:43px;top:84px;"><svg width="12" height="12"><path d="M0.5,11.5 L0.5,0.5 L11.5,0.5" stroke="#2a2a2a" fill="none"/><path d="M11,1 L11,11 L1,11" stroke="#d4d0c8" fill="none"/><path d="M2.8,5.2 L5,8.6 L9.2,2.8" stroke="#000" stroke-width="2.1" fill="none"/></svg></div>
<div class="abs trow" style="left:60px;top:82px;">Sig$67</div>
<div class="abs chk" style="left:43px;top:100px;"><svg width="12" height="12"><path d="M0.5,11.5 L0.5,0.5 L11.5,0.5" stroke="#2a2a2a" fill="none"/><path d="M11,1 L11,11 L1,11" stroke="#d4d0c8" fill="none"/><path d="M2.8,5.2 L5,8.6 L9.2,2.8" stroke="#000" stroke-width="2.1" fill="none"/></svg></div>
<div class="abs trow" style="left:60px;top:98px;">Sig$68</div>
<div class="abs chk" style="left:43px;top:116px;"><svg width="12" height="12"><path d="M0.5,11.5 L0.5,0.5 L11.5,0.5" stroke="#2a2a2a" fill="none"/><path d="M11,1 L11,11 L1,11" stroke="#d4d0c8" fill="none"/><path d="M2.8,5.2 L5,8.6 L9.2,2.8" stroke="#000" stroke-width="2.1" fill="none"/></svg></div>
<div class="abs trow" style="left:60px;top:114px;">Sig$69</div>
<div class="abs chk" style="left:43px;top:132px;"><svg width="12" height="12"><path d="M0.5,11.5 L0.5,0.5 L11.5,0.5" stroke="#2a2a2a" fill="none"/><path d="M11,1 L11,11 L1,11" stroke="#d4d0c8" fill="none"/><path d="M2.8,5.2 L5,8.6 L9.2,2.8" stroke="#000" stroke-width="2.1" fill="none"/></svg></div>
<div class="abs trow" style="left:60px;top:130px;">Sig$7</div>
<div class="abs chk" style="left:43px;top:148px;"><svg width="12" height="12"><path d="M0.5,11.5 L0.5,0.5 L11.5,0.5" stroke="#2a2a2a" fill="none"/><path d="M11,1 L11,11 L1,11" stroke="#d4d0c8" fill="none"/><path d="M2.8,5.2 L5,8.6 L9.2,2.8" stroke="#000" stroke-width="2.1" fill="none"/></svg></div>
<div class="abs trow" style="left:60px;top:146px;">Sig$70</div>
<div class="abs chk" style="left:43px;top:164px;"><svg width="12" height="12"><path d="M0.5,11.5 L0.5,0.5 L11.5,0.5" stroke="#2a2a2a" fill="none"/><path d="M11,1 L11,11 L1,11" stroke="#d4d0c8" fill="none"/><path d="M2.8,5.2 L5,8.6 L9.2,2.8" stroke="#000" stroke-width="2.1" fill="none"/></svg></div>
<div class="abs trow" style="left:60px;top:162px;">Sig$71</div>
<div class="abs chk" style="left:43px;top:180px;"><svg width="12" height="12"><path d="M0.5,11.5 L0.5,0.5 L11.5,0.5" stroke="#2a2a2a" fill="none"/><path d="M11,1 L11,11 L1,11" stroke="#d4d0c8" fill="none"/><path d="M2.8,5.2 L5,8.6 L9.2,2.8" stroke="#000" stroke-width="2.1" fill="none"/></svg></div>
<div class="abs trow" style="left:60px;top:178px;">Sig$72</div>
<div class="abs chk" style="left:43px;top:196px;"><svg width="12" height="12"><path d="M0.5,11.5 L0.5,0.5 L11.5,0.5" stroke="#2a2a2a" fill="none"/><path d="M11,1 L11,11 L1,11" stroke="#d4d0c8" fill="none"/><path d="M2.8,5.2 L5,8.6 L9.2,2.8" stroke="#000" stroke-width="2.1" fill="none"/></svg></div>
<div class="abs trow" style="left:60px;top:194px;">Sig$8</div>
<div class="abs chk" style="left:43px;top:212px;"><svg width="12" height="12"><path d="M0.5,11.5 L0.5,0.5 L11.5,0.5" stroke="#2a2a2a" fill="none"/><path d="M11,1 L11,11 L1,11" stroke="#d4d0c8" fill="none"/><path d="M2.8,5.2 L5,8.6 L9.2,2.8" stroke="#000" stroke-width="2.1" fill="none"/></svg></div>
<div class="abs trow" style="left:60px;top:210px;">Sig$9</div>
<div class="abs chk" style="left:43px;top:228px;"><svg width="12" height="12"><path d="M0.5,11.5 L0.5,0.5 L11.5,0.5" stroke="#2a2a2a" fill="none"/><path d="M11,1 L11,11 L1,11" stroke="#d4d0c8" fill="none"/><path d="M2.8,5.2 L5,8.6 L9.2,2.8" stroke="#000" stroke-width="2.1" fill="none"/></svg></div>
<div class="abs trow" style="left:60px;top:226px;">VS</div>
<div class="abs" style="left:7px;top:246px;width:6px;height:6px;border:1px solid #7a8ea8;background:linear-gradient(#fff,#d8d8cc);border-radius:1px"></div>
<div class="abs" style="left:9px;top:249px;width:4px;height:1px;background:#222"></div>
<div class="abs" style="left:38px;top:241px;width:50px;height:16px;background:#ecead9"></div>
<div class="abs chk" style="left:24px;top:244px;"><svg width="12" height="12"><path d="M0.5,11.5 L0.5,0.5 L11.5,0.5" stroke="#2a2a2a" fill="none"/><path d="M11,1 L11,11 L1,11" stroke="#d4d0c8" fill="none"/><path d="M2.8,5.2 L5,8.6 L9.2,2.8" stroke="#000" stroke-width="2.1" fill="none"/></svg></div>
<div class="abs trow" style="left:40px;top:242px;">Gehäuse</div>
<div class="abs chk" style="left:43px;top:260px;"><svg width="12" height="12"><path d="M0.5,11.5 L0.5,0.5 L11.5,0.5" stroke="#2a2a2a" fill="none"/><path d="M11,1 L11,11 L1,11" stroke="#d4d0c8" fill="none"/><path d="M2.8,5.2 L5,8.6 L9.2,2.8" stroke="#000" stroke-width="2.1" fill="none"/></svg></div>
<div class="abs trow" style="left:60px;top:258px;">D1, LED_5MM</div>
<div class="abs chk" style="left:43px;top:276px;"><svg width="12" height="12"><path d="M0.5,11.5 L0.5,0.5 L11.5,0.5" stroke="#2a2a2a" fill="none"/><path d="M11,1 L11,11 L1,11" stroke="#d4d0c8" fill="none"/><path d="M2.8,5.2 L5,8.6 L9.2,2.8" stroke="#000" stroke-width="2.1" fill="none"/></svg></div>
<div class="abs trow" style="left:60px;top:274px;">D10, LED_5MM</div>
<div class="abs chk" style="left:43px;top:292px;"><svg width="12" height="12"><path d="M0.5,11.5 L0.5,0.5 L11.5,0.5" stroke="#2a2a2a" fill="none"/><path d="M11,1 L11,11 L1,11" stroke="#d4d0c8" fill="none"/><path d="M2.8,5.2 L5,8.6 L9.2,2.8" stroke="#000" stroke-width="2.1" fill="none"/></svg></div>
<div class="abs trow" style="left:60px;top:290px;">D11, LED_5MM</div>
<div class="abs chk" style="left:43px;top:308px;"><svg width="12" height="12"><path d="M0.5,11.5 L0.5,0.5 L11.5,0.5" stroke="#2a2a2a" fill="none"/><path d="M11,1 L11,11 L1,11" stroke="#d4d0c8" fill="none"/><path d="M2.8,5.2 L5,8.6 L9.2,2.8" stroke="#000" stroke-width="2.1" fill="none"/></svg></div>
<div class="abs trow" style="left:60px;top:306px;">D12, LED_5MM</div>
<div class="abs chk" style="left:43px;top:324px;"><svg width="12" height="12"><path d="M0.5,11.5 L0.5,0.5 L11.5,0.5" stroke="#2a2a2a" fill="none"/><path d="M11,1 L11,11 L1,11" stroke="#d4d0c8" fill="none"/><path d="M2.8,5.2 L5,8.6 L9.2,2.8" stroke="#000" stroke-width="2.1" fill="none"/></svg></div>
<div class="abs trow" style="left:60px;top:322px;">D13, LED_5MM</div>
<div class="abs chk" style="left:43px;top:340px;"><svg width="12" height="12"><path d="M0.5,11.5 L0.5,0.5 L11.5,0.5" stroke="#2a2a2a" fill="none"/><path d="M11,1 L11,11 L1,11" stroke="#d4d0c8" fill="none"/><path d="M2.8,5.2 L5,8.6 L9.2,2.8" stroke="#000" stroke-width="2.1" fill="none"/></svg></div>
<div class="abs trow" style="left:60px;top:338px;">D15, LED_5MM</div>
<div class="abs chk" style="left:43px;top:356px;"><svg width="12" height="12"><path d="M0.5,11.5 L0.5,0.5 L11.5,0.5" stroke="#2a2a2a" fill="none"/><path d="M11,1 L11,11 L1,11" stroke="#d4d0c8" fill="none"/><path d="M2.8,5.2 L5,8.6 L9.2,2.8" stroke="#000" stroke-width="2.1" fill="none"/></svg></div>
<div class="abs trow" style="left:60px;top:354px;">D16, LED_5MM</div>
<div class="abs chk" style="left:43px;top:372px;"><svg width="12" height="12"><path d="M0.5,11.5 L0.5,0.5 L11.5,0.5" stroke="#2a2a2a" fill="none"/><path d="M11,1 L11,11 L1,11" stroke="#d4d0c8" fill="none"/><path d="M2.8,5.2 L5,8.6 L9.2,2.8" stroke="#000" stroke-width="2.1" fill="none"/></svg></div>
<div class="abs trow" style="left:60px;top:370px;">D17, LED_5MM</div>
<div class="abs chk" style="left:43px;top:388px;"><svg width="12" height="12"><path d="M0.5,11.5 L0.5,0.5 L11.5,0.5" stroke="#2a2a2a" fill="none"/><path d="M11,1 L11,11 L1,11" stroke="#d4d0c8" fill="none"/><path d="M2.8,5.2 L5,8.6 L9.2,2.8" stroke="#000" stroke-width="2.1" fill="none"/></svg></div>
<div class="abs trow" style="left:60px;top:386px;">D18, LED_5MM</div>
<div class="abs chk" style="left:43px;top:404px;"><svg width="12" height="12"><path d="M0.5,11.5 L0.5,0.5 L11.5,0.5" stroke="#2a2a2a" fill="none"/><path d="M11,1 L11,11 L1,11" stroke="#d4d0c8" fill="none"/><path d="M2.8,5.2 L5,8.6 L9.2,2.8" stroke="#000" stroke-width="2.1" fill="none"/></svg></div>
<div class="abs trow" style="left:60px;top:402px;">D2, LED_5MM</div>
<div class="abs chk" style="left:43px;top:420px;"><svg width="12" height="12"><path d="M0.5,11.5 L0.5,0.5 L11.5,0.5" stroke="#2a2a2a" fill="none"/><path d="M11,1 L11,11 L1,11" stroke="#d4d0c8" fill="none"/><path d="M2.8,5.2 L5,8.6 L9.2,2.8" stroke="#000" stroke-width="2.1" fill="none"/></svg></div>
<div class="abs trow" style="left:60px;top:418px;">D3, LED_5MM</div>
<div class="abs chk" style="left:43px;top:436px;"><svg width="12" height="12"><path d="M0.5,11.5 L0.5,0.5 L11.5,0.5" stroke="#2a2a2a" fill="none"/><path d="M11,1 L11,11 L1,11" stroke="#d4d0c8" fill="none"/><path d="M2.8,5.2 L5,8.6 L9.2,2.8" stroke="#000" stroke-width="2.1" fill="none"/></svg></div>
<div class="abs trow" style="left:60px;top:434px;">D33, 1N4148</div>
<div class="abs chk" style="left:43px;top:452px;"><svg width="12" height="12"><path d="M0.5,11.5 L0.5,0.5 L11.5,0.5" stroke="#2a2a2a" fill="none"/><path d="M11,1 L11,11 L1,11" stroke="#d4d0c8" fill="none"/><path d="M2.8,5.2 L5,8.6 L9.2,2.8" stroke="#000" stroke-width="2.1" fill="none"/></svg></div>
<div class="abs trow" style="left:60px;top:450px;">D34, LED_5MM</div>
<div class="abs chk" style="left:43px;top:468px;"><svg width="12" height="12"><path d="M0.5,11.5 L0.5,0.5 L11.5,0.5" stroke="#2a2a2a" fill="none"/><path d="M11,1 L11,11 L1,11" stroke="#d4d0c8" fill="none"/><path d="M2.8,5.2 L5,8.6 L9.2,2.8" stroke="#000" stroke-width="2.1" fill="none"/></svg></div>
<div class="abs trow" style="left:60px;top:466px;">D4, LED_5MM</div>
<div class="abs chk" style="left:43px;top:484px;"><svg width="12" height="12"><path d="M0.5,11.5 L0.5,0.5 L11.5,0.5" stroke="#2a2a2a" fill="none"/><path d="M11,1 L11,11 L1,11" stroke="#d4d0c8" fill="none"/><path d="M2.8,5.2 L5,8.6 L9.2,2.8" stroke="#000" stroke-width="2.1" fill="none"/></svg></div>
<div class="abs trow" style="left:60px;top:482px;">D5, LED_5MM</div>
<div class="abs chk" style="left:43px;top:500px;"><svg width="12" height="12"><path d="M0.5,11.5 L0.5,0.5 L11.5,0.5" stroke="#2a2a2a" fill="none"/><path d="M11,1 L11,11 L1,11" stroke="#d4d0c8" fill="none"/><path d="M2.8,5.2 L5,8.6 L9.2,2.8" stroke="#000" stroke-width="2.1" fill="none"/></svg></div>
<div class="abs trow" style="left:60px;top:498px;">D6, LED_5MM</div>
<div class="abs chk" style="left:43px;top:516px;"><svg width="12" height="12"><path d="M0.5,11.5 L0.5,0.5 L11.5,0.5" stroke="#2a2a2a" fill="none"/><path d="M11,1 L11,11 L1,11" stroke="#d4d0c8" fill="none"/><path d="M2.8,5.2 L5,8.6 L9.2,2.8" stroke="#000" stroke-width="2.1" fill="none"/></svg></div>
<div class="abs trow" style="left:60px;top:514px;">D7, LED_5MM</div>
<div class="abs chk" style="left:43px;top:532px;"><svg width="12" height="12"><path d="M0.5,11.5 L0.5,0.5 L11.5,0.5" stroke="#2a2a2a" fill="none"/><path d="M11,1 L11,11 L1,11" stroke="#d4d0c8" fill="none"/><path d="M2.8,5.2 L5,8.6 L9.2,2.8" stroke="#000" stroke-width="2.1" fill="none"/></svg></div>
<div class="abs trow" style="left:60px;top:530px;">D8, LED_5MM</div>
<div class="abs chk" style="left:43px;top:548px;"><svg width="12" height="12"><path d="M0.5,11.5 L0.5,0.5 L11.5,0.5" stroke="#2a2a2a" fill="none"/><path d="M11,1 L11,11 L1,11" stroke="#d4d0c8" fill="none"/><path d="M2.8,5.2 L5,8.6 L9.2,2.8" stroke="#000" stroke-width="2.1" fill="none"/></svg></div>
<div class="abs trow" style="left:60px;top:546px;">IC1, PC847</div>
<div class="abs chk" style="left:43px;top:564px;"><svg width="12" height="12"><path d="M0.5,11.5 L0.5,0.5 L11.5,0.5" stroke="#2a2a2a" fill="none"/><path d="M11,1 L11,11 L1,11" stroke="#d4d0c8" fill="none"/><path d="M2.8,5.2 L5,8.6 L9.2,2.8" stroke="#000" stroke-width="2.1" fill="none"/></svg></div>
<div class="abs trow" style="left:60px;top:562px;">IC2, PC847</div>
<div class="abs chk" style="left:43px;top:580px;"><svg width="12" height="12"><path d="M0.5,11.5 L0.5,0.5 L11.5,0.5" stroke="#2a2a2a" fill="none"/><path d="M11,1 L11,11 L1,11" stroke="#d4d0c8" fill="none"/><path d="M2.8,5.2 L5,8.6 L9.2,2.8" stroke="#000" stroke-width="2.1" fill="none"/></svg></div>
<div class="abs trow" style="left:60px;top:578px;">IC5, PC847</div>
<div class="abs chk" style="left:43px;top:596px;"><svg width="12" height="12"><path d="M0.5,11.5 L0.5,0.5 L11.5,0.5" stroke="#2a2a2a" fill="none"/><path d="M11,1 L11,11 L1,11" stroke="#d4d0c8" fill="none"/><path d="M2.8,5.2 L5,8.6 L9.2,2.8" stroke="#000" stroke-width="2.1" fill="none"/></svg></div>
<div class="abs trow" style="left:60px;top:594px;">IC6, PC847</div>
<div class="abs chk" style="left:43px;top:612px;"><svg width="12" height="12"><path d="M0.5,11.5 L0.5,0.5 L11.5,0.5" stroke="#2a2a2a" fill="none"/><path d="M11,1 L11,11 L1,11" stroke="#d4d0c8" fill="none"/><path d="M2.8,5.2 L5,8.6 L9.2,2.8" stroke="#000" stroke-width="2.1" fill="none"/></svg></div>
<div class="abs trow" style="left:60px;top:610px;">K2, 250-17</div>
<div class="abs chk" style="left:43px;top:628px;"><svg width="12" height="12"><path d="M0.5,11.5 L0.5,0.5 L11.5,0.5" stroke="#2a2a2a" fill="none"/><path d="M11,1 L11,11 L1,11" stroke="#d4d0c8" fill="none"/><path d="M2.8,5.2 L5,8.6 L9.2,2.8" stroke="#000" stroke-width="2.1" fill="none"/></svg></div>
<div class="abs trow" style="left:60px;top:626px;">K5, VG64</div>
<div class="abs chk" style="left:43px;top:644px;"><svg width="12" height="12"><path d="M0.5,11.5 L0.5,0.5 L11.5,0.5" stroke="#2a2a2a" fill="none"/><path d="M11,1 L11,11 L1,11" stroke="#d4d0c8" fill="none"/><path d="M2.8,5.2 L5,8.6 L9.2,2.8" stroke="#000" stroke-width="2.1" fill="none"/></svg></div>
<div class="abs trow" style="left:60px;top:642px;">R1, 3,3k</div>
<div class="abs chk" style="left:43px;top:660px;"><svg width="12" height="12"><path d="M0.5,11.5 L0.5,0.5 L11.5,0.5" stroke="#2a2a2a" fill="none"/><path d="M11,1 L11,11 L1,11" stroke="#d4d0c8" fill="none"/><path d="M2.8,5.2 L5,8.6 L9.2,2.8" stroke="#000" stroke-width="2.1" fill="none"/></svg></div>
<div class="abs trow" style="left:60px;top:658px;">R10, 3,3k</div>
<div class="abs chk" style="left:43px;top:676px;"><svg width="12" height="12"><path d="M0.5,11.5 L0.5,0.5 L11.5,0.5" stroke="#2a2a2a" fill="none"/><path d="M11,1 L11,11 L1,11" stroke="#d4d0c8" fill="none"/><path d="M2.8,5.2 L5,8.6 L9.2,2.8" stroke="#000" stroke-width="2.1" fill="none"/></svg></div>
<div class="abs trow" style="left:60px;top:674px;">R11, 3,3k</div>
<div class="abs chk" style="left:43px;top:692px;"><svg width="12" height="12"><path d="M0.5,11.5 L0.5,0.5 L11.5,0.5" stroke="#2a2a2a" fill="none"/><path d="M11,1 L11,11 L1,11" stroke="#d4d0c8" fill="none"/><path d="M2.8,5.2 L5,8.6 L9.2,2.8" stroke="#000" stroke-width="2.1" fill="none"/></svg></div>
<div class="abs trow" style="left:60px;top:690px;">R12, 3,3k</div>
<div class="abs chk" style="left:43px;top:708px;"><svg width="12" height="12"><path d="M0.5,11.5 L0.5,0.5 L11.5,0.5" stroke="#2a2a2a" fill="none"/><path d="M11,1 L11,11 L1,11" stroke="#d4d0c8" fill="none"/><path d="M2.8,5.2 L5,8.6 L9.2,2.8" stroke="#000" stroke-width="2.1" fill="none"/></svg></div>
<div class="abs trow" style="left:60px;top:706px;">R13, 3,3k</div>
<div class="abs chk" style="left:43px;top:724px;"><svg width="12" height="12"><path d="M0.5,11.5 L0.5,0.5 L11.5,0.5" stroke="#2a2a2a" fill="none"/><path d="M11,1 L11,11 L1,11" stroke="#d4d0c8" fill="none"/><path d="M2.8,5.2 L5,8.6 L9.2,2.8" stroke="#000" stroke-width="2.1" fill="none"/></svg></div>
<div class="abs trow" style="left:60px;top:722px;">R14, 3,3k</div>
<div class="abs chk" style="left:43px;top:740px;"><svg width="12" height="12"><path d="M0.5,11.5 L0.5,0.5 L11.5,0.5" stroke="#2a2a2a" fill="none"/><path d="M11,1 L11,11 L1,11" stroke="#d4d0c8" fill="none"/><path d="M2.8,5.2 L5,8.6 L9.2,2.8" stroke="#000" stroke-width="2.1" fill="none"/></svg></div>
<div class="abs trow" style="left:60px;top:738px;">R15, 3,3k</div>
<div class="abs chk" style="left:43px;top:756px;"><svg width="12" height="12"><path d="M0.5,11.5 L0.5,0.5 L11.5,0.5" stroke="#2a2a2a" fill="none"/><path d="M11,1 L11,11 L1,11" stroke="#d4d0c8" fill="none"/><path d="M2.8,5.2 L5,8.6 L9.2,2.8" stroke="#000" stroke-width="2.1" fill="none"/></svg></div>
<div class="abs trow" style="left:60px;top:754px;">R16, 3,3k</div>
<div class="abs chk" style="left:43px;top:772px;"><svg width="12" height="12"><path d="M0.5,11.5 L0.5,0.5 L11.5,0.5" stroke="#2a2a2a" fill="none"/><path d="M11,1 L11,11 L1,11" stroke="#d4d0c8" fill="none"/><path d="M2.8,5.2 L5,8.6 L9.2,2.8" stroke="#000" stroke-width="2.1" fill="none"/></svg></div>
<div class="abs trow" style="left:60px;top:770px;">R17, 3,3k</div>
<div class="abs chk" style="left:43px;top:788px;"><svg width="12" height="12"><path d="M0.5,11.5 L0.5,0.5 L11.5,0.5" stroke="#2a2a2a" fill="none"/><path d="M11,1 L11,11 L1,11" stroke="#d4d0c8" fill="none"/><path d="M2.8,5.2 L5,8.6 L9.2,2.8" stroke="#000" stroke-width="2.1" fill="none"/></svg></div>
<div class="abs trow" style="left:60px;top:786px;">R2, 3,3k</div>
<div class="abs chk" style="left:43px;top:804px;"><svg width="12" height="12"><path d="M0.5,11.5 L0.5,0.5 L11.5,0.5" stroke="#2a2a2a" fill="none"/><path d="M11,1 L11,11 L1,11" stroke="#d4d0c8" fill="none"/><path d="M2.8,5.2 L5,8.6 L9.2,2.8" stroke="#000" stroke-width="2.1" fill="none"/></svg></div>
<div class="abs trow" style="left:60px;top:802px;">R3, 3,3k</div>
<div class="abs chk" style="left:43px;top:820px;"><svg width="12" height="12"><path d="M0.5,11.5 L0.5,0.5 L11.5,0.5" stroke="#2a2a2a" fill="none"/><path d="M11,1 L11,11 L1,11" stroke="#d4d0c8" fill="none"/><path d="M2.8,5.2 L5,8.6 L9.2,2.8" stroke="#000" stroke-width="2.1" fill="none"/></svg></div>
<div class="abs trow" style="left:60px;top:818px;">R4, 3,3k</div>
<div class="abs chk" style="left:43px;top:836px;"><svg width="12" height="12"><path d="M0.5,11.5 L0.5,0.5 L11.5,0.5" stroke="#2a2a2a" fill="none"/><path d="M11,1 L11,11 L1,11" stroke="#d4d0c8" fill="none"/><path d="M2.8,5.2 L5,8.6 L9.2,2.8" stroke="#000" stroke-width="2.1" fill="none"/></svg></div>
<div class="abs trow" style="left:60px;top:834px;">R5, 3,3k</div>
<div class="abs chk" style="left:43px;top:852px;"><svg width="12" height="12"><path d="M0.5,11.5 L0.5,0.5 L11.5,0.5" stroke="#2a2a2a" fill="none"/><path d="M11,1 L11,11 L1,11" stroke="#d4d0c8" fill="none"/><path d="M2.8,5.2 L5,8.6 L9.2,2.8" stroke="#000" stroke-width="2.1" fill="none"/></svg></div>
<div class="abs trow" style="left:60px;top:850px;">R6, 3,3k</div>
<div class="abs chk" style="left:43px;top:868px;"><svg width="12" height="12"><path d="M0.5,11.5 L0.5,0.5 L11.5,0.5" stroke="#2a2a2a" fill="none"/><path d="M11,1 L11,11 L1,11" stroke="#d4d0c8" fill="none"/><path d="M2.8,5.2 L5,8.6 L9.2,2.8" stroke="#000" stroke-width="2.1" fill="none"/></svg></div>
<div class="abs trow" style="left:60px;top:866px;">R7, 3,3k</div>
<div class="abs chk" style="left:43px;top:884px;"><svg width="12" height="12"><path d="M0.5,11.5 L0.5,0.5 L11.5,0.5" stroke="#2a2a2a" fill="none"/><path d="M11,1 L11,11 L1,11" stroke="#d4d0c8" fill="none"/><path d="M2.8,5.2 L5,8.6 L9.2,2.8" stroke="#000" stroke-width="2.1" fill="none"/></svg></div>
<div class="abs trow" style="left:60px;top:882px;">R8, 3,3k</div>
<div class="abs chk" style="left:43px;top:900px;"><svg width="12" height="12"><path d="M0.5,11.5 L0.5,0.5 L11.5,0.5" stroke="#2a2a2a" fill="none"/><path d="M11,1 L11,11 L1,11" stroke="#d4d0c8" fill="none"/><path d="M2.8,5.2 L5,8.6 L9.2,2.8" stroke="#000" stroke-width="2.1" fill="none"/></svg></div>
<div class="abs trow" style="left:60px;top:898px;">R9, 3,3k</div>
</div>
<div class="abs" style="left:104px;top:58px;width:17px;height:916px;background:linear-gradient(90deg,#f0efe8,#fdfdfb 40%,#f4f3ee)"></div>
<div class="abs sb" style="left:105px;top:59px;width:15px;height:16px;"></div><svg class="abs" style="left:106px;top:61px" width="14" height="12"><path d="M3,8 L7,4 L11,8" stroke="#4d6185" stroke-width="2" fill="none"/></svg>
<div class="abs sb" style="left:105px;top:549px;width:15px;height:407px;"></div>
<svg class="abs" style="left:107px;top:748px" width="12" height="12"><path d="M3,2.5 H9 M3,4.5 H9 M3,6.5 H9 M3,8.5 H9" stroke="#f0f4ff" stroke-width="1"/><path d="M4,3.5 H10 M4,5.5 H10 M4,7.5 H10 M4,9.5 H10" stroke="#8da4d8" stroke-width="1"/></svg>
<div class="abs sb" style="left:105px;top:957px;width:15px;height:17px;"></div><svg class="abs" style="left:106px;top:959px" width="14" height="12"><path d="M3,4 L7,8 L11,4" stroke="#4d6185" stroke-width="2" fill="none"/></svg>
<div class="abs" style="left:2px;top:974px;width:102px;height:17px;background:linear-gradient(#f0efe8,#fdfdfb 40%,#f4f3ee)"></div>
<div class="abs" style="left:104px;top:974px;width:17px;height:17px;background:#ece9d8"></div>
<div class="abs sb" style="left:3px;top:975px;width:15px;height:15px;"></div><svg class="abs" style="left:4px;top:976px" width="14" height="13"><path d="M9,2.5 L5,6.5 L9,10.5" stroke="#4d6185" stroke-width="2" fill="none"/></svg>
<div class="abs sb" style="left:21px;top:975px;width:35px;height:15px;"></div>
<svg class="abs" style="left:33px;top:977px" width="12" height="12"><path d="M2.5,3 V9 M4.5,3 V9 M6.5,3 V9 M8.5,3 V9" stroke="#f0f4ff" stroke-width="1"/><path d="M3.5,4 V10 M5.5,4 V10 M7.5,4 V10 M9.5,4 V10" stroke="#8da4d8" stroke-width="1"/></svg>
<div class="abs sb" style="left:88px;top:975px;width:15px;height:15px;"></div><svg class="abs" style="left:89px;top:976px" width="14" height="13"><path d="M5,2.5 L9,6.5 L5,10.5" stroke="#4d6185" stroke-width="2" fill="none"/></svg>
<div class="abs" style="left:123px;top:56px;width:4px;height:937px;background:#ece9d8"></div>
<div class="abs" style="left:123px;top:56px;width:1px;height:937px;background:#a2a4a4"></div>
<div class="abs" style="left:126px;top:56px;width:1px;height:937px;background:#aca899"></div>
<div class="abs" style="left:128px;top:988px;width:1152px;height:5px;background:#ece9d8"></div>
<div class="abs" style="left:128px;top:989px;width:1152px;height:1px;background:#aca899"></div>
<div class="abs" style="left:128px;top:991px;width:1152px;height:1px;background:#aca899"></div>
<div class="abs" style="left:0;top:993px;width:1284px;height:5px;background:linear-gradient(#3d8df5,#245edb)"></div>
<div class="abs" style="left:0;top:993px;width:95px;height:5px;background:linear-gradient(#5eb25e,#3c923c)"></div>
<div class="abs" style="left:1206px;top:993px;width:74px;height:5px;background:linear-gradient(#1ea8f0,#0f98e8);border-left:1px solid #0a60c0"></div>
<div class="abs" style="left:1280px;top:0;width:4px;height:998px;background:linear-gradient(#00898a 0px,#007a7a 60px,#0c3a2e 130px,#0c3a2e 440px,#18a0b0 520px,#006a78 600px,#005a68 998px)"></div>
</body></html>
